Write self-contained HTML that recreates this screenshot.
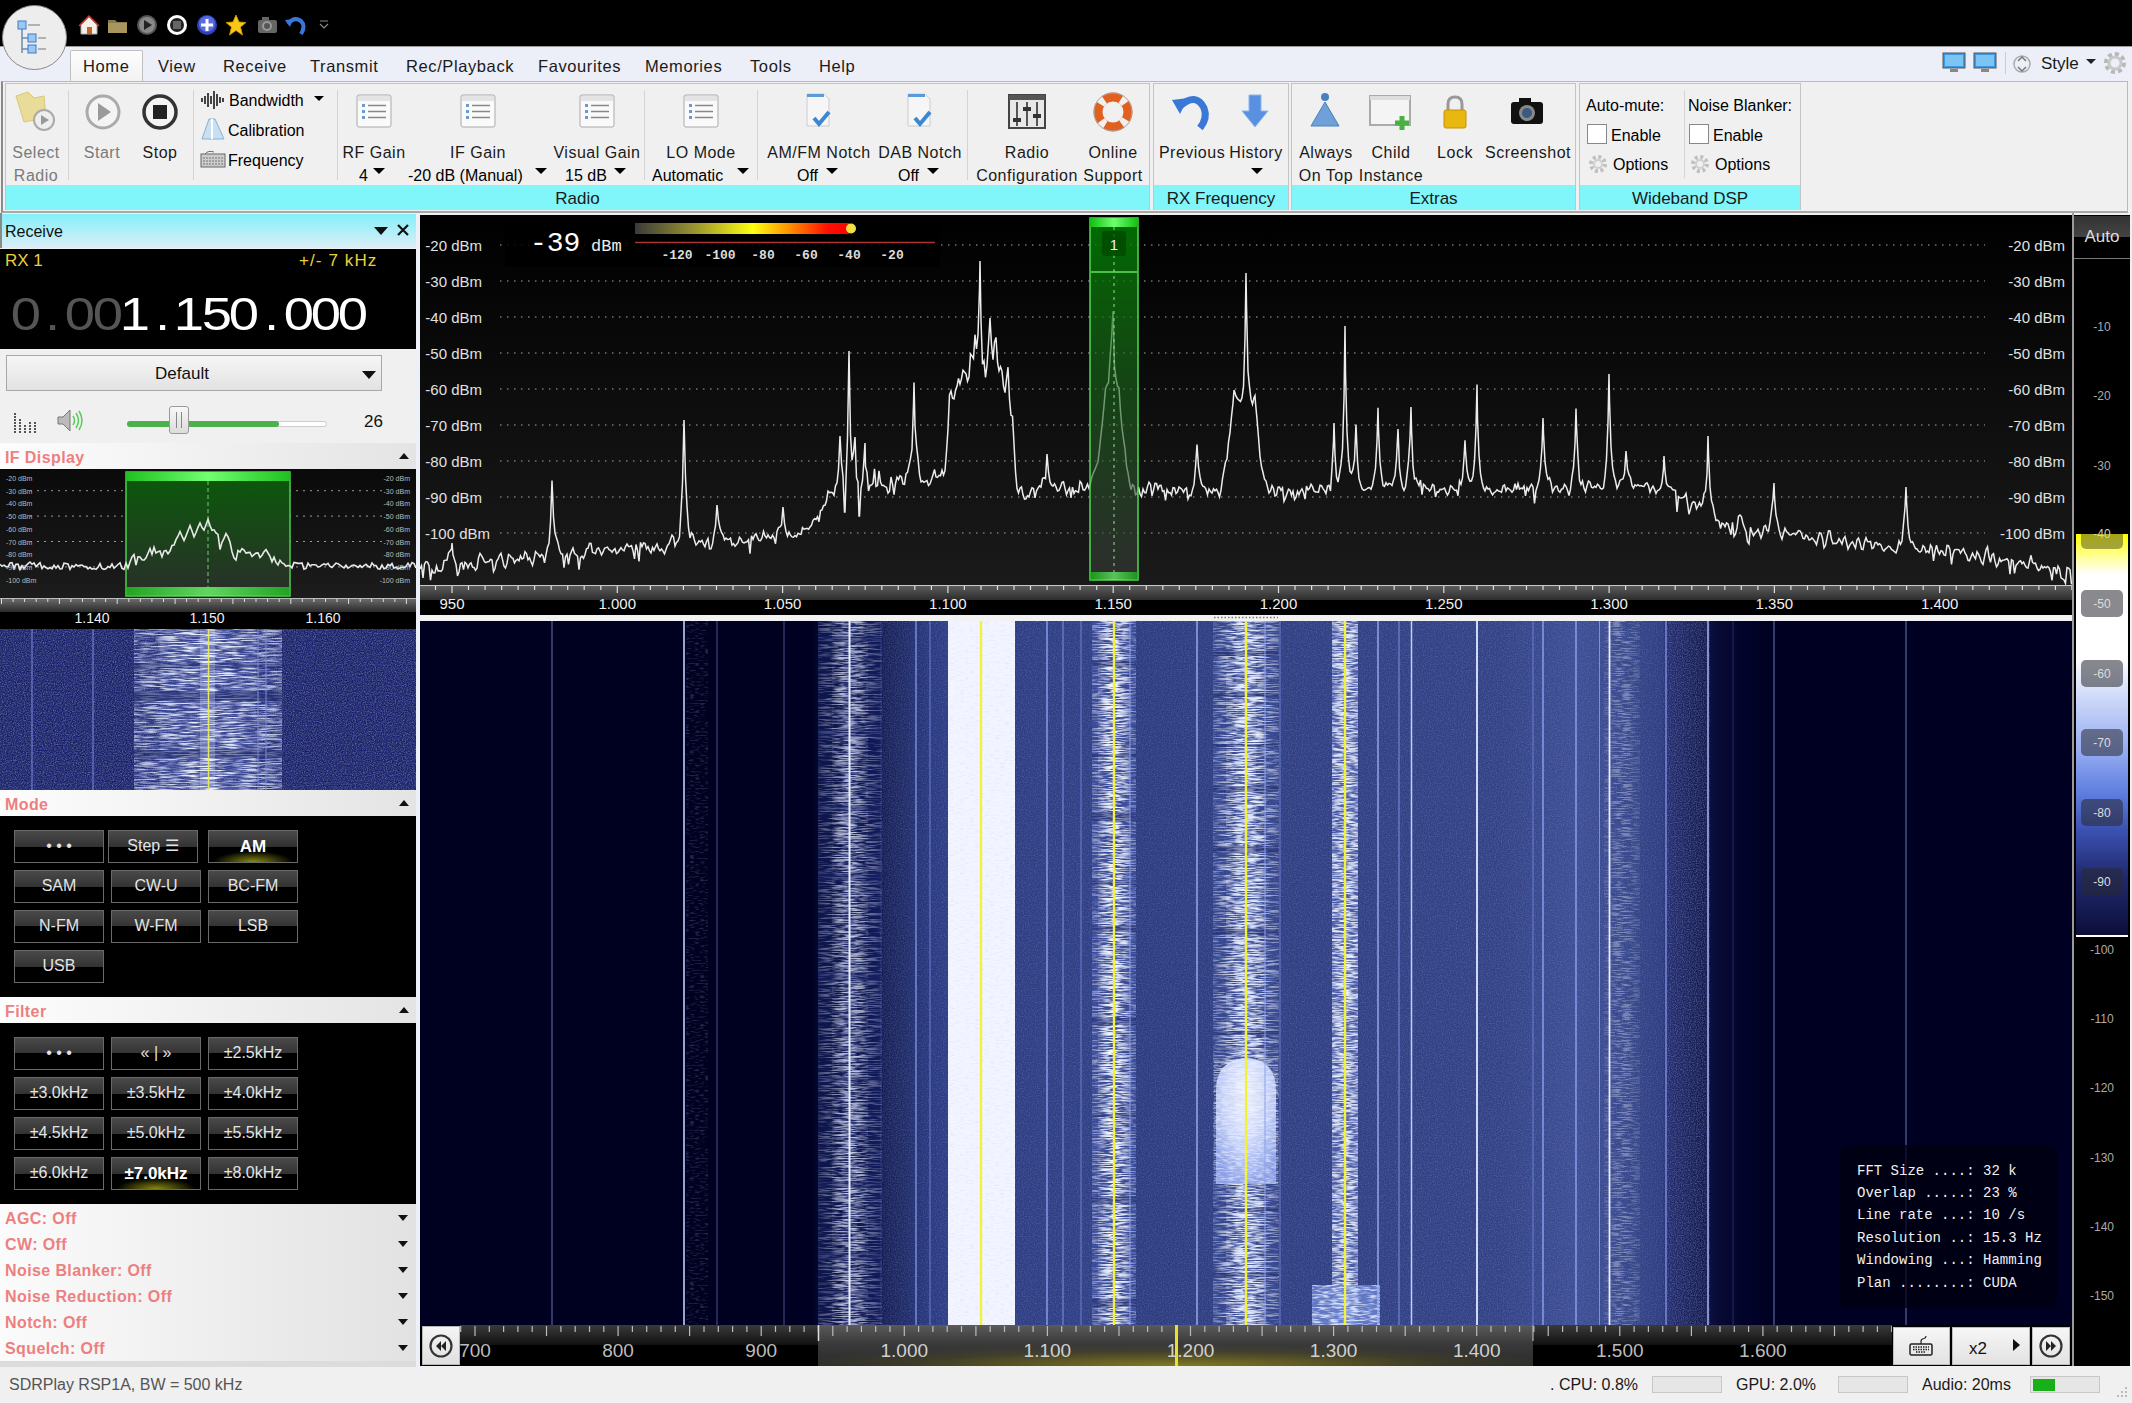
<!DOCTYPE html><html><head><meta charset="utf-8"><style>
*{margin:0;padding:0;box-sizing:border-box}
html,body{width:2132px;height:1403px;overflow:hidden;background:#f0f0f0;font-family:"Liberation Sans",sans-serif;color:#000}
.a{position:absolute}
.t{position:absolute;white-space:nowrap;line-height:1}
.ls{letter-spacing:0.5px}
.c{text-align:center}
</style></head><body><div class="a" style="left:0;top:0;width:2132px;height:46px;background:#000"></div>
<div class="a" style="left:0;top:46px;width:2132px;height:36px;background:#eceef8;border-top:1px solid #9a9a9a"></div>
<div class="a" style="left:2px;top:5px;width:65px;height:65px;border-radius:50%;background:#ededed;border:1px solid #8a8a8a"></div>
<svg class="a" style="left:16px;top:18px" width="34" height="40" viewBox="0 0 34 40"><path d="M6 8 V35 M6 20 H12 M6 31 H12" stroke="#6a8bb0" stroke-width="1.5" fill="none"/><rect x="2" y="3" width="8" height="8" fill="#9cc8f0" stroke="#3b7bc8"/><rect x="12" y="16" width="8" height="8" fill="#9cc8f0" stroke="#3b7bc8"/><rect x="12" y="27" width="8" height="8" fill="#9cc8f0" stroke="#3b7bc8"/><path d="M12 7H24 M22 20H30 M22 31H30" stroke="#777" stroke-width="1"/></svg>
<svg class="a" style="left:78px;top:14px" width="22" height="22" viewBox="0 0 22 22"><path d="M3 11 L11 3 L19 11 V20 H3Z" fill="#f4f0e8" stroke="#aaa"/><rect x="9" y="13" width="5" height="7" fill="#c8641e"/><path d="M1 12 L11 2 L21 12" stroke="#c33" stroke-width="1.5" fill="none"/></svg>
<svg class="a" style="left:106px;top:14px" width="22" height="22" viewBox="0 0 22 22"><path d="M2 6 H9 L11 8 H21 V19 H2Z" fill="#8a7a4a"/><path d="M2 9 H21 V19 H2Z" fill="#a8965c"/></svg>
<svg class="a" style="left:136px;top:14px" width="22" height="22" viewBox="0 0 22 22"><circle cx="11" cy="11" r="10" fill="#555"/><circle cx="11" cy="11" r="8" fill="#888"/><path d="M8 6 L16 11 L8 16Z" fill="#222"/></svg>
<svg class="a" style="left:166px;top:14px" width="22" height="22" viewBox="0 0 22 22"><circle cx="11" cy="11" r="10" fill="#fff"/><circle cx="11" cy="11" r="7" fill="#222"/><rect x="7" y="7" width="8" height="8" fill="#666"/></svg>
<svg class="a" style="left:196px;top:14px" width="22" height="22" viewBox="0 0 22 22"><circle cx="11" cy="11" r="10" fill="#3040b8"/><circle cx="11" cy="10" r="8" fill="#5a6ae0"/><path d="M11 5 V17 M5 11 H17" stroke="#fff" stroke-width="3"/></svg>
<svg class="a" style="left:225px;top:14px" width="22" height="22" viewBox="0 0 22 22"><path d="M11 1 L14 8 L21 8.5 L15.5 13 L17.5 21 L11 16.5 L4.5 21 L6.5 13 L1 8.5 L8 8Z" fill="#f8c818" stroke="#d89a00" stroke-width="0.8"/></svg>
<svg class="a" style="left:256px;top:14px" width="22" height="22" viewBox="0 0 22 22"><rect x="2" y="6" width="19" height="13" rx="2" fill="#666"/><rect x="6" y="3" width="7" height="4" fill="#666"/><circle cx="11" cy="12" r="5" fill="#999"/><circle cx="11" cy="12" r="3" fill="#555"/></svg>
<svg class="a" style="left:284px;top:14px" width="22" height="22" viewBox="0 0 22 22"><path d="M4 10 Q10 2 17 7 Q22 12 17 20" stroke="#3a78d8" stroke-width="4" fill="none"/><path d="M1 6 L9 5 L6 13Z" fill="#3a78d8"/></svg>
<svg class="a" style="left:319px;top:19px" width="10" height="12" viewBox="0 0 10 12"><path d="M1 2H9 M1 5 L5 9 L9 5" stroke="#888" stroke-width="1.2" fill="none"/></svg>
<div class="a" style="left:70px;top:50px;width:73px;height:32px;background:linear-gradient(#fdfdfd,#f2f2f2);border:1px solid #c0c0c0;border-bottom:none;border-radius:2px 2px 0 0"></div>
<div class="t" style="left:83px;top:58px;font-size:16.5px;letter-spacing:0.6px;color:#1a1a1a">Home</div>
<div class="t" style="left:158px;top:58px;font-size:16.5px;letter-spacing:0.6px;color:#1a1a1a">View</div>
<div class="t" style="left:223px;top:58px;font-size:16.5px;letter-spacing:0.6px;color:#1a1a1a">Receive</div>
<div class="t" style="left:310px;top:58px;font-size:16.5px;letter-spacing:0.6px;color:#1a1a1a">Transmit</div>
<div class="t" style="left:406px;top:58px;font-size:16.5px;letter-spacing:0.6px;color:#1a1a1a">Rec/Playback</div>
<div class="t" style="left:538px;top:58px;font-size:16.5px;letter-spacing:0.6px;color:#1a1a1a">Favourites</div>
<div class="t" style="left:645px;top:58px;font-size:16.5px;letter-spacing:0.6px;color:#1a1a1a">Memories</div>
<div class="t" style="left:750px;top:58px;font-size:16.5px;letter-spacing:0.6px;color:#1a1a1a">Tools</div>
<div class="t" style="left:819px;top:58px;font-size:16.5px;letter-spacing:0.6px;color:#1a1a1a">Help</div>
<svg class="a" style="left:1942px;top:52px" width="24" height="22" viewBox="0 0 24 22"><rect x="1" y="1" width="22" height="15" fill="#3a9ae8" stroke="#555"/><rect x="3" y="3" width="18" height="11" fill="#7cc4f4"/><rect x="8" y="17" width="8" height="3" fill="#888"/></svg>
<svg class="a" style="left:1973px;top:52px" width="24" height="22" viewBox="0 0 24 22"><rect x="1" y="1" width="22" height="15" fill="#3a9ae8" stroke="#555"/><rect x="3" y="3" width="18" height="11" fill="#7cc4f4"/><rect x="8" y="17" width="8" height="3" fill="#888"/></svg>
<div class="a" style="left:2005px;top:52px;width:1px;height:22px;background:#ccc"></div>
<svg class="a" style="left:2013px;top:51px" width="18" height="26" viewBox="0 0 18 26"><circle cx="9" cy="13" r="8" fill="none" stroke="#aaa" stroke-width="1.5"/><path d="M5 10 L9 6 L13 10 M5 16 L9 20 L13 16" stroke="#777" stroke-width="1.5" fill="none"/></svg>
<div class="t" style="left:2041px;top:55px;font-size:17px;color:#1a1a1a">Style</div>
<svg class="a" style="left:2086px;top:59px" width="10" height="6"><path d="M0 0H10L5 5Z" fill="#222"/></svg>
<svg class="a" style="left:2102px;top:50px" width="26" height="26" viewBox="0 0 26 26"><circle cx="13" cy="13" r="9" fill="none" stroke="#b8b8b8" stroke-width="4" stroke-dasharray="4 3"/><circle cx="13" cy="13" r="6" fill="none" stroke="#c8c8c8" stroke-width="3"/></svg>
<div class="a" style="left:1px;top:81px;width:2127px;height:132px;background:#f0f0f0;border:1px solid #b9b9b9;border-bottom:2px solid #a8a8a8;border-left:2px solid #8a8a8a"></div>
<div class="a" style="left:5px;top:83px;width:1145px;height:127px;border:1px solid #c4c4c4;background:#f0f0f0"></div>
<div class="a" style="left:6px;top:185px;width:1143px;height:25px;background:#80f6fa"></div>
<div class="t c" style="left:5px;width:1145px;top:190px;font-size:17px;color:#1a1a1a">Radio</div>
<div class="a" style="left:1153px;top:83px;width:136px;height:127px;border:1px solid #c4c4c4;background:#f0f0f0"></div>
<div class="a" style="left:1154px;top:185px;width:134px;height:25px;background:#80f6fa"></div>
<div class="t c" style="left:1153px;width:136px;top:190px;font-size:17px;color:#1a1a1a">RX Frequency</div>
<div class="a" style="left:1291px;top:83px;width:285px;height:127px;border:1px solid #c4c4c4;background:#f0f0f0"></div>
<div class="a" style="left:1292px;top:185px;width:283px;height:25px;background:#80f6fa"></div>
<div class="t c" style="left:1291px;width:285px;top:190px;font-size:17px;color:#1a1a1a">Extras</div>
<div class="a" style="left:1579px;top:83px;width:222px;height:127px;border:1px solid #c4c4c4;background:#f0f0f0"></div>
<div class="a" style="left:1580px;top:185px;width:220px;height:25px;background:#80f6fa"></div>
<div class="t c" style="left:1579px;width:222px;top:190px;font-size:17px;color:#1a1a1a">Wideband DSP</div>
<div class="a" style="left:68px;top:90px;width:1px;height:90px;background:#d4d4d4"></div>
<div class="a" style="left:193px;top:90px;width:1px;height:90px;background:#d4d4d4"></div>
<div class="a" style="left:337px;top:90px;width:1px;height:90px;background:#d4d4d4"></div>
<div class="a" style="left:644px;top:90px;width:1px;height:90px;background:#d4d4d4"></div>
<div class="a" style="left:757px;top:90px;width:1px;height:90px;background:#d4d4d4"></div>
<div class="a" style="left:967px;top:90px;width:1px;height:90px;background:#d4d4d4"></div>
<svg class="a" style="left:14px;top:90px" width="46" height="42" viewBox="0 0 46 42"><path d="M2 6 L14 2 L20 8 L30 6 L32 28 L10 32Z" fill="#e8dc98" stroke="#d8c878"/><circle cx="30" cy="30" r="10" fill="#eee" stroke="#aaa" stroke-width="2"/><path d="M27 25 L35 30 L27 35Z" fill="#999"/></svg>
<div class="t c" style="left:-114px;width:300px;top:144.5px;font-size:16px;letter-spacing:0.5px;color:#7a7a7a">Select</div>
<div class="t c" style="left:-114px;width:300px;top:167.5px;font-size:16px;letter-spacing:0.5px;color:#7a7a7a">Radio</div>
<svg class="a" style="left:84px;top:93px" width="38" height="38" viewBox="0 0 38 38"><circle cx="19" cy="19" r="16" fill="#f4f4f4" stroke="#aaa" stroke-width="3"/><path d="M14 10 L27 19 L14 28Z" fill="#9a9a9a"/></svg>
<div class="t c" style="left:-48px;width:300px;top:144.5px;font-size:16px;letter-spacing:0.5px;color:#7a7a7a">Start</div>
<svg class="a" style="left:141px;top:93px" width="38" height="38" viewBox="0 0 38 38"><circle cx="19" cy="19" r="16" fill="#f4f4f4" stroke="#333" stroke-width="3.5"/><rect x="12" y="12" width="14" height="14" fill="#222"/></svg>
<div class="t c" style="left:10px;width:300px;top:144.5px;font-size:16px;letter-spacing:0.5px;color:#1a1a1a">Stop</div>
<svg class="a" style="left:200px;top:90px" width="26" height="20" viewBox="0 0 26 20"><path d="M2 8V12 M5 6V14 M8 3V17 M11 6V14 M14 1V19 M17 4V16 M20 7V13 M23 8V12" stroke="#444" stroke-width="2"/></svg>
<div class="t" style="left:229px;top:93px;font-size:16px">Bandwidth</div>
<svg class="a" style="left:314px;top:96px" width="10" height="6"><path d="M0 0H10L5 5Z" fill="#000"/></svg>
<svg class="a" style="left:200px;top:117px" width="26" height="24" viewBox="0 0 26 24"><path d="M9 2 H15 L24 22 H2Z" fill="#c8e0f4" stroke="#8ab0d0"/><path d="M12 2V22" stroke="#fff" stroke-width="2"/></svg>
<div class="t" style="left:228px;top:123px;font-size:16px">Calibration</div>
<svg class="a" style="left:200px;top:150px" width="26" height="18" viewBox="0 0 26 18"><rect x="1" y="4" width="24" height="13" fill="#ccc" stroke="#666"/><path d="M3 8H23 M3 11H23 M3 14H23" stroke="#777" stroke-dasharray="2 1"/><path d="M5 4 Q8 0 14 2" stroke="#666" fill="none"/></svg>
<div class="t" style="left:228px;top:153px;font-size:16px">Frequency</div>
<svg class="a" style="left:356px;top:94px" width="36" height="34" viewBox="0 0 36 34"><rect x="1" y="1" width="34" height="32" rx="2" fill="#fafafa" stroke="#aaa"/><rect x="2" y="2" width="32" height="5" fill="#e4e4e4"/><rect x="6" y="10" width="3" height="3" fill="#6a9ad0"/><rect x="6" y="16" width="3" height="3" fill="#6a9ad0"/><rect x="6" y="22" width="3" height="3" fill="#6a9ad0"/><path d="M12 11.5H30 M12 17.5H30 M12 23.5H30" stroke="#888" stroke-width="1.5"/></svg>
<div class="t c" style="left:224px;width:300px;top:144.5px;font-size:16px;letter-spacing:0.5px;color:#1a1a1a">RF Gain</div>
<svg class="a" style="left:460px;top:94px" width="36" height="34" viewBox="0 0 36 34"><rect x="1" y="1" width="34" height="32" rx="2" fill="#fafafa" stroke="#aaa"/><rect x="2" y="2" width="32" height="5" fill="#e4e4e4"/><rect x="6" y="10" width="3" height="3" fill="#6a9ad0"/><rect x="6" y="16" width="3" height="3" fill="#6a9ad0"/><rect x="6" y="22" width="3" height="3" fill="#6a9ad0"/><path d="M12 11.5H30 M12 17.5H30 M12 23.5H30" stroke="#888" stroke-width="1.5"/></svg>
<div class="t c" style="left:328px;width:300px;top:144.5px;font-size:16px;letter-spacing:0.5px;color:#1a1a1a">IF Gain</div>
<svg class="a" style="left:579px;top:94px" width="36" height="34" viewBox="0 0 36 34"><rect x="1" y="1" width="34" height="32" rx="2" fill="#fafafa" stroke="#aaa"/><rect x="2" y="2" width="32" height="5" fill="#e4e4e4"/><rect x="6" y="10" width="3" height="3" fill="#6a9ad0"/><rect x="6" y="16" width="3" height="3" fill="#6a9ad0"/><rect x="6" y="22" width="3" height="3" fill="#6a9ad0"/><path d="M12 11.5H30 M12 17.5H30 M12 23.5H30" stroke="#888" stroke-width="1.5"/></svg>
<div class="t c" style="left:447px;width:300px;top:144.5px;font-size:16px;letter-spacing:0.5px;color:#1a1a1a">Visual Gain</div>
<svg class="a" style="left:683px;top:94px" width="36" height="34" viewBox="0 0 36 34"><rect x="1" y="1" width="34" height="32" rx="2" fill="#fafafa" stroke="#aaa"/><rect x="2" y="2" width="32" height="5" fill="#e4e4e4"/><rect x="6" y="10" width="3" height="3" fill="#6a9ad0"/><rect x="6" y="16" width="3" height="3" fill="#6a9ad0"/><rect x="6" y="22" width="3" height="3" fill="#6a9ad0"/><path d="M12 11.5H30 M12 17.5H30 M12 23.5H30" stroke="#888" stroke-width="1.5"/></svg>
<div class="t c" style="left:551px;width:300px;top:144.5px;font-size:16px;letter-spacing:0.5px;color:#1a1a1a">LO Mode</div>
<div class="t" style="left:359px;top:167.5px;font-size:16px">4</div>
<svg class="a" style="left:373px;top:168px" width="12" height="7"><path d="M0 0H12L6.0 6.0Z" fill="#000"/></svg>
<div class="t" style="left:408px;top:167.5px;font-size:16px">-20 dB (Manual)</div>
<svg class="a" style="left:535px;top:168px" width="12" height="7"><path d="M0 0H12L6.0 6.0Z" fill="#000"/></svg>
<div class="t" style="left:565px;top:167.5px;font-size:16px">15 dB</div>
<svg class="a" style="left:614px;top:168px" width="12" height="7"><path d="M0 0H12L6.0 6.0Z" fill="#000"/></svg>
<div class="t" style="left:652px;top:167.5px;font-size:16px">Automatic</div>
<svg class="a" style="left:737px;top:168px" width="12" height="7"><path d="M0 0H12L6.0 6.0Z" fill="#000"/></svg>
<svg class="a" style="left:802px;top:92px" width="34" height="40" viewBox="0 0 34 40"><path d="M5 2 H22 L27 7 V34 H5Z" fill="#f6f6f6" stroke="#ccc"/><rect x="5" y="2" width="17" height="3" fill="#5a9ad8"/><path d="M12 26 L17 32 L27 20" stroke="#3a88d0" stroke-width="4" fill="none"/></svg>
<div class="t c" style="left:669px;width:300px;top:144.5px;font-size:16px;letter-spacing:0.5px;color:#1a1a1a">AM/FM Notch</div>
<div class="t" style="left:797px;top:167.5px;font-size:16px">Off</div>
<svg class="a" style="left:826px;top:168px" width="12" height="7"><path d="M0 0H12L6.0 6.0Z" fill="#000"/></svg>
<svg class="a" style="left:903px;top:92px" width="34" height="40" viewBox="0 0 34 40"><path d="M5 2 H22 L27 7 V34 H5Z" fill="#f6f6f6" stroke="#ccc"/><rect x="5" y="2" width="17" height="3" fill="#5a9ad8"/><path d="M12 26 L17 32 L27 20" stroke="#3a88d0" stroke-width="4" fill="none"/></svg>
<div class="t c" style="left:770px;width:300px;top:144.5px;font-size:16px;letter-spacing:0.5px;color:#1a1a1a">DAB Notch</div>
<div class="t" style="left:898px;top:167.5px;font-size:16px">Off</div>
<svg class="a" style="left:927px;top:168px" width="12" height="7"><path d="M0 0H12L6.0 6.0Z" fill="#000"/></svg>
<svg class="a" style="left:1008px;top:94px" width="38" height="36" viewBox="0 0 38 36"><rect x="1" y="1" width="36" height="33" fill="#e8e8e8" stroke="#444" stroke-width="2"/><rect x="1" y="1" width="36" height="5" fill="#555"/><path d="M9 8V32 M19 8V32 M29 8V32" stroke="#555" stroke-width="2"/><rect x="5" y="24" width="8" height="4" fill="#333"/><rect x="15" y="13" width="8" height="4" fill="#333"/><rect x="25" y="20" width="8" height="4" fill="#333"/></svg>
<div class="t c" style="left:877px;width:300px;top:144.5px;font-size:16px;letter-spacing:0.5px;color:#1a1a1a">Radio</div>
<div class="t c" style="left:877px;width:300px;top:167.5px;font-size:16px;letter-spacing:0.5px;color:#1a1a1a">Configuration</div>
<svg class="a" style="left:1093px;top:92px" width="40" height="40" viewBox="0 0 40 40"><circle cx="20" cy="20" r="15" fill="none" stroke="#e06020" stroke-width="9"/><circle cx="20" cy="20" r="15" fill="none" stroke="#f0f0f0" stroke-width="9" stroke-dasharray="6 17.5" stroke-dashoffset="-8"/><circle cx="20" cy="20" r="19" fill="none" stroke="#aaa" stroke-width="1"/></svg>
<div class="t c" style="left:963px;width:300px;top:144.5px;font-size:16px;letter-spacing:0.5px;color:#1a1a1a">Online</div>
<div class="t c" style="left:963px;width:300px;top:167.5px;font-size:16px;letter-spacing:0.5px;color:#1a1a1a">Support</div>
<svg class="a" style="left:1170px;top:92px" width="44" height="40" viewBox="0 0 44 40"><path d="M10 14 Q26 0 34 16 Q38 26 30 36" stroke="#3a78d8" stroke-width="7" fill="none"/><path d="M2 8 L18 6 L10 22Z" fill="#3a78d8"/></svg>
<div class="t c" style="left:1042px;width:300px;top:144.5px;font-size:16px;letter-spacing:0.5px;color:#1a1a1a">Previous</div>
<svg class="a" style="left:1240px;top:93px" width="30" height="38" viewBox="0 0 30 38"><path d="M9 2 H21 V18 H28 L15 34 L2 18 H9Z" fill="#5a90e0" stroke="#8ab8f0"/></svg>
<div class="t c" style="left:1106px;width:300px;top:144.5px;font-size:16px;letter-spacing:0.5px;color:#1a1a1a">History</div>
<svg class="a" style="left:1251px;top:168px" width="12" height="7"><path d="M0 0H12L6.0 6.0Z" fill="#000"/></svg>
<svg class="a" style="left:1307px;top:92px" width="36" height="40" viewBox="0 0 36 40"><circle cx="18" cy="5" r="4" fill="#4a80c0"/><path d="M18 10 L32 34 H4Z" fill="#70a0d8" stroke="#4a80c0"/></svg>
<div class="t c" style="left:1176px;width:300px;top:144.5px;font-size:16px;letter-spacing:0.5px;color:#1a1a1a">Always</div>
<div class="t c" style="left:1176px;width:300px;top:167.5px;font-size:16px;letter-spacing:0.5px;color:#1a1a1a">On Top</div>
<svg class="a" style="left:1368px;top:94px" width="46" height="38" viewBox="0 0 46 38"><rect x="2" y="2" width="40" height="29" fill="#f4f4f4" stroke="#aaa" stroke-width="2"/><rect x="2" y="2" width="40" height="4" fill="#ddd"/><path d="M34 22V36 M27 29H41" stroke="#4ab040" stroke-width="5"/></svg>
<div class="t c" style="left:1241px;width:300px;top:144.5px;font-size:16px;letter-spacing:0.5px;color:#1a1a1a">Child</div>
<div class="t c" style="left:1241px;width:300px;top:167.5px;font-size:16px;letter-spacing:0.5px;color:#1a1a1a">Instance</div>
<svg class="a" style="left:1440px;top:94px" width="30" height="38" viewBox="0 0 30 38"><path d="M8 16 V10 Q8 3 15 3 Q22 3 22 10 V16" stroke="#999" stroke-width="3" fill="none"/><rect x="4" y="16" width="22" height="18" rx="2" fill="#e8b810" stroke="#c89000"/></svg>
<div class="t c" style="left:1305px;width:300px;top:144.5px;font-size:16px;letter-spacing:0.5px;color:#1a1a1a">Lock</div>
<svg class="a" style="left:1509px;top:96px" width="36" height="30" viewBox="0 0 36 30"><rect x="2" y="6" width="32" height="22" rx="3" fill="#111"/><rect x="10" y="2" width="12" height="6" fill="#111"/><circle cx="18" cy="17" r="8" fill="#888"/><circle cx="18" cy="17" r="5" fill="#3a5a80"/></svg>
<div class="t c" style="left:1378px;width:300px;top:144.5px;font-size:16px;letter-spacing:0.5px;color:#1a1a1a">Screenshot</div>
<div class="a" style="left:1684px;top:90px;width:1px;height:88px;background:#d4d4d4"></div>
<div class="t" style="left:1586px;top:98px;font-size:16px">Auto-mute:</div>
<div class="t" style="left:1688px;top:98px;font-size:16px">Noise Blanker:</div>
<div class="a" style="left:1587px;top:124px;width:20px;height:20px;background:#fff;border:1px solid #888"></div>
<div class="t" style="left:1611px;top:128px;font-size:16px">Enable</div>
<svg class="a" style="left:1587px;top:153px" width="22" height="22" viewBox="0 0 22 22"><circle cx="11" cy="11" r="7" fill="none" stroke="#c0c0c0" stroke-width="4" stroke-dasharray="3 2.5"/><circle cx="11" cy="11" r="4" fill="none" stroke="#d0d0d0" stroke-width="2"/></svg>
<div class="t" style="left:1613px;top:157px;font-size:16px">Options</div>
<div class="a" style="left:1689px;top:124px;width:20px;height:20px;background:#fff;border:1px solid #888"></div>
<div class="t" style="left:1713px;top:128px;font-size:16px">Enable</div>
<svg class="a" style="left:1689px;top:153px" width="22" height="22" viewBox="0 0 22 22"><circle cx="11" cy="11" r="7" fill="none" stroke="#c0c0c0" stroke-width="4" stroke-dasharray="3 2.5"/><circle cx="11" cy="11" r="4" fill="none" stroke="#d0d0d0" stroke-width="2"/></svg>
<div class="t" style="left:1715px;top:157px;font-size:16px">Options</div>
<div class="a" style="left:0;top:213px;width:420px;height:1155px;background:#eef0f6"></div>
<div class="a" style="left:2px;top:214px;width:414px;height:34px;background:linear-gradient(#82f0fa,#dceef6)"></div>
<div class="a" style="left:0;top:213px;width:2px;height:35px;background:#8a8a8a"></div>
<div class="t" style="left:5px;top:223.5px;font-size:16px;color:#111">Receive</div>
<svg class="a" style="left:374px;top:227px" width="14" height="8"><path d="M0 0H14L7 8Z" fill="#111"/></svg>
<svg class="a" style="left:396px;top:223px" width="14" height="14"><path d="M2 2L12 12M12 2L2 12" stroke="#111" stroke-width="2.2"/></svg>
<div class="a" style="left:0;top:249px;width:416px;height:100px;background:#000"></div>
<div class="t" style="left:5px;top:252px;font-size:17px;color:#e8d23a">RX 1</div>
<div class="t" style="left:299px;top:252px;font-size:17px;letter-spacing:1.1px;color:#e8d23a">+/- 7 kHz</div>
<div class="a" style="left:12px;top:289px;height:50px;font-size:46.5px;line-height:50px;white-space:nowrap"><span style="display:inline-block;width:27.3px;text-align:center;color:#555"><span style="display:inline-block;transform:scaleX(1.17)">0</span></span><span style="display:inline-block;width:27.3px;text-align:center;color:#555"><span style="display:inline-block;transform:scaleX(1.17)">.</span></span><span style="display:inline-block;width:27.3px;text-align:center;color:#555"><span style="display:inline-block;transform:scaleX(1.17)">0</span></span><span style="display:inline-block;width:27.3px;text-align:center;color:#555"><span style="display:inline-block;transform:scaleX(1.17)">0</span></span><span style="display:inline-block;width:27.3px;text-align:center;color:#fff"><span style="display:inline-block;transform:scaleX(1.17)">1</span></span><span style="display:inline-block;width:27.3px;text-align:center;color:#fff"><span style="display:inline-block;transform:scaleX(1.17)">.</span></span><span style="display:inline-block;width:27.3px;text-align:center;color:#fff"><span style="display:inline-block;transform:scaleX(1.17)">1</span></span><span style="display:inline-block;width:27.3px;text-align:center;color:#fff"><span style="display:inline-block;transform:scaleX(1.17)">5</span></span><span style="display:inline-block;width:27.3px;text-align:center;color:#fff"><span style="display:inline-block;transform:scaleX(1.17)">0</span></span><span style="display:inline-block;width:27.3px;text-align:center;color:#fff"><span style="display:inline-block;transform:scaleX(1.17)">.</span></span><span style="display:inline-block;width:27.3px;text-align:center;color:#fff"><span style="display:inline-block;transform:scaleX(1.17)">0</span></span><span style="display:inline-block;width:27.3px;text-align:center;color:#fff"><span style="display:inline-block;transform:scaleX(1.17)">0</span></span><span style="display:inline-block;width:27.3px;text-align:center;color:#fff"><span style="display:inline-block;transform:scaleX(1.17)">0</span></span></div>
<div class="a" style="left:0;top:349px;width:416px;height:94px;background:#f0f0f0"></div>
<div class="a" style="left:6px;top:355px;width:376px;height:36px;background:linear-gradient(#f6f6f6,#e2e2e2);border:1px solid #a8a8a8"></div>
<div class="t c" style="left:6px;width:352px;top:365px;font-size:17px;color:#111">Default</div>
<svg class="a" style="left:362px;top:371px" width="14" height="8"><path d="M0 0H14L7 8Z" fill="#111"/></svg>
<svg class="a" style="left:13px;top:412px" width="25" height="21" viewBox="0 0 25 21"><g stroke="#555" stroke-width="2" stroke-dasharray="2 1"><path d="M2 1V21"/><path d="M7 7V21"/><path d="M12 13V21"/><path d="M17 10V21"/><path d="M22 10V21"/></g></svg>
<svg class="a" style="left:57px;top:408px" width="28" height="25" viewBox="0 0 28 25"><path d="M1 9H6L13 2V23L6 16H1Z" fill="#bbb" stroke="#777"/><path d="M16 8Q19 12.5 16 17M19 5Q24 12.5 19 20M22 3Q28 12.5 22 22" stroke="#5c5" stroke-width="1.5" fill="none"/></svg>
<div class="a" style="left:127px;top:421px;width:200px;height:6px;border-radius:3px;background:#fff;border:1px solid #ccc"></div>
<div class="a" style="left:127px;top:421px;width:152px;height:6px;border-radius:3px;background:#4cb04c"></div>
<div class="a" style="left:169px;top:406px;width:20px;height:28px;border-radius:3px;background:linear-gradient(#f8f8f8,#dcdcdc);border:1px solid #999"></div>
<div class="a" style="left:176px;top:412px;width:1px;height:16px;background:#888"></div><div class="a" style="left:181px;top:412px;width:1px;height:16px;background:#888"></div>
<div class="t" style="left:364px;top:413px;font-size:17px;color:#111">26</div>
<div class="a" style="left:0;top:443px;width:416px;height:26px;background:linear-gradient(90deg,#fdfdfd,#e4e4e4)"></div>
<div class="t" style="left:5px;top:450px;font-size:16px;font-weight:bold;letter-spacing:0.4px;color:#ee7f7f">IF Display</div>
<svg class="a" style="left:399px;top:453px" width="10" height="6"><path d="M0 6H10L5 0Z" fill="#111"/></svg>
<div class="a" style="left:0;top:469px;width:416px;height:129px;background:linear-gradient(#0a0a0a,#1c1c1c)"></div>
<svg class="a" style="left:0;top:469px" width="416" height="160" viewBox="0 0 416 160"><text x="6" y="12.0" font-size="7" fill="#bbb" font-family="Liberation Sans">-20 dBm</text><text x="410" y="12.0" font-size="7" fill="#bbb" text-anchor="end" font-family="Liberation Sans">-20 dBm</text><text x="6" y="24.7" font-size="7" fill="#bbb" font-family="Liberation Sans">-30 dBm</text><text x="410" y="24.7" font-size="7" fill="#bbb" text-anchor="end" font-family="Liberation Sans">-30 dBm</text><path d="M30 21.7 H386" stroke="#999" stroke-width="1" stroke-dasharray="2 5"/><text x="6" y="37.4" font-size="7" fill="#bbb" font-family="Liberation Sans">-40 dBm</text><text x="410" y="37.4" font-size="7" fill="#bbb" text-anchor="end" font-family="Liberation Sans">-40 dBm</text><text x="6" y="50.099999999999994" font-size="7" fill="#bbb" font-family="Liberation Sans">-50 dBm</text><text x="410" y="50.099999999999994" font-size="7" fill="#bbb" text-anchor="end" font-family="Liberation Sans">-50 dBm</text><path d="M30 47.099999999999994 H386" stroke="#999" stroke-width="1" stroke-dasharray="2 5"/><text x="6" y="62.8" font-size="7" fill="#bbb" font-family="Liberation Sans">-60 dBm</text><text x="410" y="62.8" font-size="7" fill="#bbb" text-anchor="end" font-family="Liberation Sans">-60 dBm</text><text x="6" y="75.5" font-size="7" fill="#bbb" font-family="Liberation Sans">-70 dBm</text><text x="410" y="75.5" font-size="7" fill="#bbb" text-anchor="end" font-family="Liberation Sans">-70 dBm</text><path d="M30 72.5 H386" stroke="#999" stroke-width="1" stroke-dasharray="2 5"/><text x="6" y="88.19999999999999" font-size="7" fill="#bbb" font-family="Liberation Sans">-80 dBm</text><text x="410" y="88.19999999999999" font-size="7" fill="#bbb" text-anchor="end" font-family="Liberation Sans">-80 dBm</text><text x="6" y="100.89999999999999" font-size="7" fill="#bbb" font-family="Liberation Sans">-90 dBm</text><text x="410" y="100.89999999999999" font-size="7" fill="#bbb" text-anchor="end" font-family="Liberation Sans">-90 dBm</text><path d="M30 97.89999999999999 H386" stroke="#999" stroke-width="1" stroke-dasharray="2 5"/><text x="6" y="113.6" font-size="7" fill="#bbb" font-family="Liberation Sans">-100 dBm</text><text x="410" y="113.6" font-size="7" fill="#bbb" text-anchor="end" font-family="Liberation Sans">-100 dBm</text><defs><linearGradient id="gb" x1="0" y1="0" x2="0" y2="1"><stop offset="0" stop-color="#0a5a0a"/><stop offset="1" stop-color="#2a2e2a"/></linearGradient><linearGradient id="gt" x1="0" y1="0" x2="1" y2="0"><stop offset="0" stop-color="#20c020"/><stop offset="0.5" stop-color="#70ff70"/><stop offset="1" stop-color="#20c020"/></linearGradient></defs><rect x="126" y="3" width="164" height="124" fill="url(#gb)" stroke="#4cd04c" stroke-width="1.5"/><rect x="126" y="3" width="164" height="9" fill="url(#gt)"/><rect x="126" y="118" width="164" height="9" fill="url(#gt)" opacity="0.8"/><path d="M208 12V118" stroke="#7c7" stroke-dasharray="4 3"/><polyline points="0,95.2 2,97.3 4,96.1 6,97.7 8,97.9 10,94.0 12,93.6 14,99.4 16,95.3 18,95.1 20,100.5 22,96.8 24,99.4 26,96.8 28,94.6 30,93.0 32,95.3 34,93.9 36,97.6 38,95.6 40,93.7 42,99.6 44,96.8 46,98.5 48,99.7 50,98.5 52,99.9 54,96.3 56,99.1 58,96.6 60,100.0 62,99.7 64,94.2 66,94.5 68,95.0 70,100.3 72,96.6 74,97.9 76,95.6 78,97.1 80,96.2 82,96.0 84,97.6 86,97.6 88,99.8 90,98.3 92,100.0 94,99.5 96,100.4 98,98.2 100,94.6 102,99.5 104,100.3 106,99.8 108,97.5 110,98.5 112,95.0 114,99.3 116,97.5 118,95.5 120,93.9 122,99.5 124,100.4 126,94.1 128,99.1 130,93.0 132,87.9 134,85.6 136,96.0 138,87.8 140,88.0 142,90.7 144,91.2 146,88.8 148,84.2 150,79.5 152,85.4 154,78.2 156,84.1 158,82.7 160,82.1 162,87.9 164,82.1 166,81.5 168,84.8 170,82.1 172,76.5 174,76.1 176,70.7 178,67.2 180,62.5 182,67.2 184,71.5 186,66.9 188,61.8 190,56.5 192,62.1 194,67.8 196,63.5 198,58.4 200,53.9 202,58.5 204,61.2 206,55.7 208,50.4 210,56.6 212,61.3 214,60.8 216,64.0 218,65.4 220,80.5 222,73.4 224,69.4 226,64.6 228,67.9 230,73.1 232,82.7 234,88.9 236,91.1 238,81.5 240,83.1 242,79.6 244,81.0 246,84.1 248,83.6 250,83.4 252,87.5 254,85.6 256,84.1 258,83.9 260,88.5 262,86.2 264,82.8 266,80.6 268,84.0 270,87.4 272,92.8 274,88.1 276,93.4 278,96.0 280,91.3 282,93.9 284,94.9 286,97.2 288,96.5 290,96.8 292,98.9 294,93.5 296,93.9 298,94.4 300,94.4 302,94.0 304,100.3 306,99.5 308,94.1 310,97.0 312,95.7 314,95.7 316,96.0 318,98.0 320,97.6 322,96.0 324,94.8 326,95.8 328,94.4 330,97.4 332,98.5 334,96.2 336,94.1 338,94.7 340,96.1 342,97.7 344,99.0 346,96.2 348,99.1 350,97.9 352,96.5 354,96.1 356,97.0 358,98.4 360,96.4 362,98.4 364,96.7 366,95.2 368,97.3 370,98.4 372,94.0 374,96.5 376,96.5 378,99.7 380,100.1 382,96.1 384,99.8 386,99.0 388,95.3 390,96.7 392,94.4 394,99.2 396,98.1 398,99.7 400,99.0 402,98.2 404,98.6 406,97.4 408,94.2 410,97.6 412,93.5 414,94.5 416,98.9" fill="none" stroke="#e8e8e8" stroke-width="1.6"/></svg>
<div class="a" style="left:0;top:598px;width:416px;height:14px;background:linear-gradient(#6a6a6a,#2a2a2a);border-top:1px solid #bbb"></div>
<svg class="a" style="left:0;top:598px" width="416" height="10"><path d="M1.5 1V6" stroke="#ddd" stroke-width="1"/><path d="M13.1 1V4" stroke="#ddd" stroke-width="1"/><path d="M24.6 1V4" stroke="#ddd" stroke-width="1"/><path d="M36.2 1V4" stroke="#ddd" stroke-width="1"/><path d="M47.8 1V4" stroke="#ddd" stroke-width="1"/><path d="M59.4 1V6" stroke="#ddd" stroke-width="1"/><path d="M70.9 1V4" stroke="#ddd" stroke-width="1"/><path d="M82.5 1V4" stroke="#ddd" stroke-width="1"/><path d="M94.1 1V4" stroke="#ddd" stroke-width="1"/><path d="M105.6 1V4" stroke="#ddd" stroke-width="1"/><path d="M117.2 1V6" stroke="#ddd" stroke-width="1"/><path d="M128.8 1V4" stroke="#ddd" stroke-width="1"/><path d="M140.3 1V4" stroke="#ddd" stroke-width="1"/><path d="M151.9 1V4" stroke="#ddd" stroke-width="1"/><path d="M163.5 1V4" stroke="#ddd" stroke-width="1"/><path d="M175.1 1V6" stroke="#ddd" stroke-width="1"/><path d="M186.6 1V4" stroke="#ddd" stroke-width="1"/><path d="M198.2 1V4" stroke="#ddd" stroke-width="1"/><path d="M209.8 1V4" stroke="#ddd" stroke-width="1"/><path d="M221.3 1V4" stroke="#ddd" stroke-width="1"/><path d="M232.9 1V6" stroke="#ddd" stroke-width="1"/><path d="M244.5 1V4" stroke="#ddd" stroke-width="1"/><path d="M256.0 1V4" stroke="#ddd" stroke-width="1"/><path d="M267.6 1V4" stroke="#ddd" stroke-width="1"/><path d="M279.2 1V4" stroke="#ddd" stroke-width="1"/><path d="M290.8 1V6" stroke="#ddd" stroke-width="1"/><path d="M302.3 1V4" stroke="#ddd" stroke-width="1"/><path d="M313.9 1V4" stroke="#ddd" stroke-width="1"/><path d="M325.5 1V4" stroke="#ddd" stroke-width="1"/><path d="M337.0 1V4" stroke="#ddd" stroke-width="1"/><path d="M348.6 1V6" stroke="#ddd" stroke-width="1"/><path d="M360.2 1V4" stroke="#ddd" stroke-width="1"/><path d="M371.7 1V4" stroke="#ddd" stroke-width="1"/><path d="M383.3 1V4" stroke="#ddd" stroke-width="1"/><path d="M394.9 1V4" stroke="#ddd" stroke-width="1"/><path d="M406.4 1V6" stroke="#ddd" stroke-width="1"/></svg>
<div class="a" style="left:0;top:612px;width:416px;height:17px;background:#000"></div>
<div class="t c" style="left:52px;width:80px;top:611px;font-size:14px;color:#eee">1.140</div>
<div class="t c" style="left:167px;width:80px;top:611px;font-size:14px;color:#eee">1.150</div>
<div class="t c" style="left:283px;width:80px;top:611px;font-size:14px;color:#eee">1.160</div>
<svg class="a" style="left:0;top:629px" width="416" height="161" viewBox="0 0 416 161"><defs><filter id="nz" x="0" y="0" width="100%" height="100%"><feTurbulence type="fractalNoise" baseFrequency="0.9" numOctaves="1" seed="4"/><feColorMatrix values="0 0 0 0 0.4  0 0 0 0 0.45  0 0 0 0 0.8  0 0 0 1.6 -0.65"/></filter><filter id="nzd" x="0" y="0" width="100%" height="100%"><feTurbulence type="fractalNoise" baseFrequency="0.8" numOctaves="1" seed="12"/><feColorMatrix values="0 0 0 0 0  0 0 0 0 0  0 0 0 0 0.15  0 0 0 1.8 -0.72"/></filter><filter id="mst" x="0" y="0" width="100%" height="100%"><feTurbulence type="fractalNoise" baseFrequency="0.09 0.55" numOctaves="2" seed="21"/><feColorMatrix values="0 0 0 0 0.85  0 0 0 0 0.9  0 0 0 0 1  0 0 0 3.4 -1.45"/></filter></defs><rect width="416" height="161" fill="#28326c"/><rect width="416" height="161" filter="url(#nz)" opacity="0.7"/><rect width="416" height="161" filter="url(#nzd)" opacity="0.9"/><defs><filter id="mst2" x="0" y="0" width="100%" height="100%"><feTurbulence type="fractalNoise" baseFrequency="0.05 0.75" numOctaves="2" seed="31"/><feColorMatrix values="0 0 0 0 0.85  0 0 0 0 0.9  0 0 0 0 1  0 0 0 4.2 -1.9"/></filter><linearGradient id="mhg" x1="0" x2="1"><stop offset="0" stop-color="#fff" stop-opacity="0.55"/><stop offset="0.45" stop-color="#fff" stop-opacity="1"/><stop offset="0.55" stop-color="#fff" stop-opacity="1"/><stop offset="1" stop-color="#fff" stop-opacity="0.55"/></linearGradient><mask id="mmk" maskContentUnits="objectBoundingBox"><rect width="1" height="1" fill="url(#mhg)"/></mask></defs><rect x="134" y="0" width="148" height="161" fill="#3a4aa0" opacity="0.3"/><rect x="160" y="0" width="96" height="161" fill="#5060b8" opacity="0.3"/><g mask="url(#mmk)"><rect x="134" y="0" width="148" height="161" filter="url(#mst2)" opacity="1"/></g><rect x="134" y="0" width="148" height="161" filter="url(#mst)" opacity="0.35"/><rect x="134" y="62" width="148" height="10" fill="#1a2468" opacity="0.55"/><rect x="134" y="121" width="148" height="8" fill="#1a2468" opacity="0.5"/><rect x="134" y="34" width="148" height="5" fill="#1a2468" opacity="0.4"/><rect x="200" y="0" width="15" height="161" fill="#d0dcff" opacity="0.3"/><path d="M208.5 0V161" stroke="#e8e860" stroke-width="1.5"/><path d="M32 0V161" stroke="#7a8ae0" stroke-width="1"/><path d="M93 0V161" stroke="#7a8ae0" stroke-width="1"/><path d="M258 0V161" stroke="#7a8ae0" stroke-width="1"/><path d="M266 0V161" stroke="#7a8ae0" stroke-width="1"/></svg>
<div class="a" style="left:0;top:790px;width:416px;height:26px;background:linear-gradient(90deg,#fdfdfd,#e4e4e4)"></div>
<div class="t" style="left:5px;top:797px;font-size:16px;font-weight:bold;letter-spacing:0.4px;color:#ee7f7f">Mode</div>
<svg class="a" style="left:399px;top:800px" width="10" height="6"><path d="M0 6H10L5 0Z" fill="#111"/></svg>
<div class="a" style="left:0;top:816px;width:416px;height:181px;background:#000"></div>
<div class="a" style="left:14px;top:830px;width:90px;height:33px;border:1px solid #6a6a6a;background:linear-gradient(#4a4a4a,#333 50%,#000 50%,#000)"></div>
<div class="t c" style="left:14px;width:90px;top:838px;font-size:16px;font-weight:normal;color:#e4e4e4">• • •</div>
<div class="a" style="left:108px;top:830px;width:90px;height:33px;border:1px solid #6a6a6a;background:linear-gradient(#4a4a4a,#333 50%,#000 50%,#000)"></div>
<div class="t c" style="left:108px;width:90px;top:838px;font-size:16px;font-weight:normal;color:#e4e4e4">Step ☰</div>
<div class="a" style="left:208px;top:830px;width:90px;height:33px;border:1px solid #6a6a6a;background:radial-gradient(ellipse 45% 35% at 50% 100%,#8a8a10,transparent),linear-gradient(#4a4a4a,#303030 50%,#000 50%,#000)"></div>
<div class="t c" style="left:208px;width:90px;top:838px;font-size:17px;font-weight:bold;color:#fff">AM</div>
<div class="a" style="left:14px;top:870px;width:90px;height:33px;border:1px solid #6a6a6a;background:linear-gradient(#4a4a4a,#333 50%,#000 50%,#000)"></div>
<div class="t c" style="left:14px;width:90px;top:878px;font-size:16px;font-weight:normal;color:#e4e4e4">SAM</div>
<div class="a" style="left:111px;top:870px;width:90px;height:33px;border:1px solid #6a6a6a;background:linear-gradient(#4a4a4a,#333 50%,#000 50%,#000)"></div>
<div class="t c" style="left:111px;width:90px;top:878px;font-size:16px;font-weight:normal;color:#e4e4e4">CW-U</div>
<div class="a" style="left:208px;top:870px;width:90px;height:33px;border:1px solid #6a6a6a;background:linear-gradient(#4a4a4a,#333 50%,#000 50%,#000)"></div>
<div class="t c" style="left:208px;width:90px;top:878px;font-size:16px;font-weight:normal;color:#e4e4e4">BC-FM</div>
<div class="a" style="left:14px;top:910px;width:90px;height:33px;border:1px solid #6a6a6a;background:linear-gradient(#4a4a4a,#333 50%,#000 50%,#000)"></div>
<div class="t c" style="left:14px;width:90px;top:918px;font-size:16px;font-weight:normal;color:#e4e4e4">N-FM</div>
<div class="a" style="left:111px;top:910px;width:90px;height:33px;border:1px solid #6a6a6a;background:linear-gradient(#4a4a4a,#333 50%,#000 50%,#000)"></div>
<div class="t c" style="left:111px;width:90px;top:918px;font-size:16px;font-weight:normal;color:#e4e4e4">W-FM</div>
<div class="a" style="left:208px;top:910px;width:90px;height:33px;border:1px solid #6a6a6a;background:linear-gradient(#4a4a4a,#333 50%,#000 50%,#000)"></div>
<div class="t c" style="left:208px;width:90px;top:918px;font-size:16px;font-weight:normal;color:#e4e4e4">LSB</div>
<div class="a" style="left:14px;top:950px;width:90px;height:33px;border:1px solid #6a6a6a;background:linear-gradient(#4a4a4a,#333 50%,#000 50%,#000)"></div>
<div class="t c" style="left:14px;width:90px;top:958px;font-size:16px;font-weight:normal;color:#e4e4e4">USB</div>
<div class="a" style="left:0;top:997px;width:416px;height:26px;background:linear-gradient(90deg,#fdfdfd,#e4e4e4)"></div>
<div class="t" style="left:5px;top:1004px;font-size:16px;font-weight:bold;letter-spacing:0.4px;color:#ee7f7f">Filter</div>
<svg class="a" style="left:399px;top:1007px" width="10" height="6"><path d="M0 6H10L5 0Z" fill="#111"/></svg>
<div class="a" style="left:0;top:1023px;width:416px;height:181px;background:#000"></div>
<div class="a" style="left:14px;top:1037px;width:90px;height:33px;border:1px solid #6a6a6a;background:linear-gradient(#4a4a4a,#333 50%,#000 50%,#000)"></div>
<div class="t c" style="left:14px;width:90px;top:1045px;font-size:16px;font-weight:normal;color:#e4e4e4">• • •</div>
<div class="a" style="left:111px;top:1037px;width:90px;height:33px;border:1px solid #6a6a6a;background:linear-gradient(#4a4a4a,#333 50%,#000 50%,#000)"></div>
<div class="t c" style="left:111px;width:90px;top:1045px;font-size:16px;font-weight:normal;color:#e4e4e4">« | »</div>
<div class="a" style="left:208px;top:1037px;width:90px;height:33px;border:1px solid #6a6a6a;background:linear-gradient(#4a4a4a,#333 50%,#000 50%,#000)"></div>
<div class="t c" style="left:208px;width:90px;top:1045px;font-size:16px;font-weight:normal;color:#e4e4e4">±2.5kHz</div>
<div class="a" style="left:14px;top:1077px;width:90px;height:33px;border:1px solid #6a6a6a;background:linear-gradient(#4a4a4a,#333 50%,#000 50%,#000)"></div>
<div class="t c" style="left:14px;width:90px;top:1085px;font-size:16px;font-weight:normal;color:#e4e4e4">±3.0kHz</div>
<div class="a" style="left:111px;top:1077px;width:90px;height:33px;border:1px solid #6a6a6a;background:linear-gradient(#4a4a4a,#333 50%,#000 50%,#000)"></div>
<div class="t c" style="left:111px;width:90px;top:1085px;font-size:16px;font-weight:normal;color:#e4e4e4">±3.5kHz</div>
<div class="a" style="left:208px;top:1077px;width:90px;height:33px;border:1px solid #6a6a6a;background:linear-gradient(#4a4a4a,#333 50%,#000 50%,#000)"></div>
<div class="t c" style="left:208px;width:90px;top:1085px;font-size:16px;font-weight:normal;color:#e4e4e4">±4.0kHz</div>
<div class="a" style="left:14px;top:1117px;width:90px;height:33px;border:1px solid #6a6a6a;background:linear-gradient(#4a4a4a,#333 50%,#000 50%,#000)"></div>
<div class="t c" style="left:14px;width:90px;top:1125px;font-size:16px;font-weight:normal;color:#e4e4e4">±4.5kHz</div>
<div class="a" style="left:111px;top:1117px;width:90px;height:33px;border:1px solid #6a6a6a;background:linear-gradient(#4a4a4a,#333 50%,#000 50%,#000)"></div>
<div class="t c" style="left:111px;width:90px;top:1125px;font-size:16px;font-weight:normal;color:#e4e4e4">±5.0kHz</div>
<div class="a" style="left:208px;top:1117px;width:90px;height:33px;border:1px solid #6a6a6a;background:linear-gradient(#4a4a4a,#333 50%,#000 50%,#000)"></div>
<div class="t c" style="left:208px;width:90px;top:1125px;font-size:16px;font-weight:normal;color:#e4e4e4">±5.5kHz</div>
<div class="a" style="left:14px;top:1157px;width:90px;height:33px;border:1px solid #6a6a6a;background:linear-gradient(#4a4a4a,#333 50%,#000 50%,#000)"></div>
<div class="t c" style="left:14px;width:90px;top:1165px;font-size:16px;font-weight:normal;color:#e4e4e4">±6.0kHz</div>
<div class="a" style="left:111px;top:1157px;width:90px;height:33px;border:1px solid #6a6a6a;background:radial-gradient(ellipse 45% 35% at 50% 100%,#8a8a10,transparent),linear-gradient(#4a4a4a,#303030 50%,#000 50%,#000)"></div>
<div class="t c" style="left:111px;width:90px;top:1165px;font-size:17px;font-weight:bold;color:#fff">±7.0kHz</div>
<div class="a" style="left:208px;top:1157px;width:90px;height:33px;border:1px solid #6a6a6a;background:linear-gradient(#4a4a4a,#333 50%,#000 50%,#000)"></div>
<div class="t c" style="left:208px;width:90px;top:1165px;font-size:16px;font-weight:normal;color:#e4e4e4">±8.0kHz</div>
<div class="a" style="left:0;top:1204px;width:416px;height:157px;background:linear-gradient(90deg,#fbfbfb,#e2e2e2)"></div>
<div class="t" style="left:5px;top:1211px;font-size:16px;font-weight:bold;letter-spacing:0.4px;color:#ee7f7f">AGC: Off</div>
<svg class="a" style="left:398px;top:1215px" width="10" height="6"><path d="M0 0H10L5 6Z" fill="#111"/></svg>
<div class="t" style="left:5px;top:1237px;font-size:16px;font-weight:bold;letter-spacing:0.4px;color:#ee7f7f">CW: Off</div>
<svg class="a" style="left:398px;top:1241px" width="10" height="6"><path d="M0 0H10L5 6Z" fill="#111"/></svg>
<div class="t" style="left:5px;top:1263px;font-size:16px;font-weight:bold;letter-spacing:0.4px;color:#ee7f7f">Noise Blanker: Off</div>
<svg class="a" style="left:398px;top:1267px" width="10" height="6"><path d="M0 0H10L5 6Z" fill="#111"/></svg>
<div class="t" style="left:5px;top:1289px;font-size:16px;font-weight:bold;letter-spacing:0.4px;color:#ee7f7f">Noise Reduction: Off</div>
<svg class="a" style="left:398px;top:1293px" width="10" height="6"><path d="M0 0H10L5 6Z" fill="#111"/></svg>
<div class="t" style="left:5px;top:1315px;font-size:16px;font-weight:bold;letter-spacing:0.4px;color:#ee7f7f">Notch: Off</div>
<svg class="a" style="left:398px;top:1319px" width="10" height="6"><path d="M0 0H10L5 6Z" fill="#111"/></svg>
<div class="t" style="left:5px;top:1341px;font-size:16px;font-weight:bold;letter-spacing:0.4px;color:#ee7f7f">Squelch: Off</div>
<svg class="a" style="left:398px;top:1345px" width="10" height="6"><path d="M0 0H10L5 6Z" fill="#111"/></svg>
<div class="a" style="left:0;top:1361px;width:420px;height:7px;background:#dcdcdc"></div>
<div class="a" style="left:0;top:1367px;width:2132px;height:36px;background:#f0f0f0"></div>
<div class="t" style="left:9px;top:1377px;font-size:16px;color:#555">SDRPlay RSP1A, BW = 500 kHz</div>
<div class="t" style="left:1550px;top:1377px;font-size:16px;color:#1a1a1a">. CPU: 0.8%</div>
<div class="a" style="left:1652px;top:1376px;width:70px;height:17px;background:#e6e6e6;border:1px solid #c8c8c8"></div>
<div class="t" style="left:1736px;top:1377px;font-size:16px;color:#1a1a1a">GPU: 2.0%</div>
<div class="a" style="left:1838px;top:1376px;width:70px;height:17px;background:#e6e6e6;border:1px solid #c8c8c8"></div>
<div class="t" style="left:1922px;top:1377px;font-size:16px;color:#1a1a1a">Audio: 20ms</div>
<div class="a" style="left:2030px;top:1376px;width:70px;height:17px;background:#e6e6e6;border:1px solid #c8c8c8"></div>
<div class="a" style="left:2033px;top:1379px;width:22px;height:12px;background:#18b018"></div>
<svg class="a" style="left:2116px;top:1386px" width="12" height="12"><g fill="#bbb"><rect x="9" y="1" width="2" height="2"/><rect x="5" y="5" width="2" height="2"/><rect x="9" y="5" width="2" height="2"/><rect x="1" y="9" width="2" height="2"/><rect x="5" y="9" width="2" height="2"/><rect x="9" y="9" width="2" height="2"/></g></svg>
<div class="a" style="left:416px;top:213px;width:4px;height:1155px;background:#eef0f8"></div>
<div class="a" style="left:420px;top:215px;width:1652px;height:370px;background:linear-gradient(#000,#1a1a1a)"></div>
<svg class="a" style="left:420px;top:215px" width="1652" height="370" viewBox="420 215 1652 370"><path d="M500 245H1985" stroke="#a8a8a8" stroke-width="1" stroke-dasharray="1.5 5.5"/><text x="482" y="250.5" font-size="15" fill="#e0e0e0" text-anchor="end" font-family="Liberation Sans">-20 dBm</text><text x="2065" y="250.5" font-size="15" fill="#e0e0e0" text-anchor="end" font-family="Liberation Sans">-20 dBm</text><path d="M500 281H1985" stroke="#a8a8a8" stroke-width="1" stroke-dasharray="1.5 5.5"/><text x="482" y="286.5" font-size="15" fill="#e0e0e0" text-anchor="end" font-family="Liberation Sans">-30 dBm</text><text x="2065" y="286.5" font-size="15" fill="#e0e0e0" text-anchor="end" font-family="Liberation Sans">-30 dBm</text><path d="M500 317H1985" stroke="#a8a8a8" stroke-width="1" stroke-dasharray="1.5 5.5"/><text x="482" y="322.5" font-size="15" fill="#e0e0e0" text-anchor="end" font-family="Liberation Sans">-40 dBm</text><text x="2065" y="322.5" font-size="15" fill="#e0e0e0" text-anchor="end" font-family="Liberation Sans">-40 dBm</text><path d="M500 353H1985" stroke="#a8a8a8" stroke-width="1" stroke-dasharray="1.5 5.5"/><text x="482" y="358.5" font-size="15" fill="#e0e0e0" text-anchor="end" font-family="Liberation Sans">-50 dBm</text><text x="2065" y="358.5" font-size="15" fill="#e0e0e0" text-anchor="end" font-family="Liberation Sans">-50 dBm</text><path d="M500 389H1985" stroke="#a8a8a8" stroke-width="1" stroke-dasharray="1.5 5.5"/><text x="482" y="394.5" font-size="15" fill="#e0e0e0" text-anchor="end" font-family="Liberation Sans">-60 dBm</text><text x="2065" y="394.5" font-size="15" fill="#e0e0e0" text-anchor="end" font-family="Liberation Sans">-60 dBm</text><path d="M500 425H1985" stroke="#a8a8a8" stroke-width="1" stroke-dasharray="1.5 5.5"/><text x="482" y="430.5" font-size="15" fill="#e0e0e0" text-anchor="end" font-family="Liberation Sans">-70 dBm</text><text x="2065" y="430.5" font-size="15" fill="#e0e0e0" text-anchor="end" font-family="Liberation Sans">-70 dBm</text><path d="M500 461H1985" stroke="#a8a8a8" stroke-width="1" stroke-dasharray="1.5 5.5"/><text x="482" y="466.5" font-size="15" fill="#e0e0e0" text-anchor="end" font-family="Liberation Sans">-80 dBm</text><text x="2065" y="466.5" font-size="15" fill="#e0e0e0" text-anchor="end" font-family="Liberation Sans">-80 dBm</text><path d="M500 497H1985" stroke="#a8a8a8" stroke-width="1" stroke-dasharray="1.5 5.5"/><text x="482" y="502.5" font-size="15" fill="#e0e0e0" text-anchor="end" font-family="Liberation Sans">-90 dBm</text><text x="2065" y="502.5" font-size="15" fill="#e0e0e0" text-anchor="end" font-family="Liberation Sans">-90 dBm</text><path d="M500 533H1985" stroke="#a8a8a8" stroke-width="1" stroke-dasharray="1.5 5.5"/><text x="490" y="538.5" font-size="15" fill="#e0e0e0" text-anchor="end" font-family="Liberation Sans">-100 dBm</text><text x="2065" y="538.5" font-size="15" fill="#e0e0e0" text-anchor="end" font-family="Liberation Sans">-100 dBm</text><text x="482" y="215" font-size="15" fill="#e0e0e0" text-anchor="end" font-family="Liberation Sans">-10 dBm</text><text x="2065" y="215" font-size="15" fill="#e0e0e0" text-anchor="end" font-family="Liberation Sans">-10 dBm</text><rect x="505" y="217" width="435" height="50" fill="#000" opacity="0.85"/><defs><linearGradient id="mg" x1="0" x2="1"><stop offset="0" stop-color="#3a3a3a"/><stop offset="0.28" stop-color="#9a9430"/><stop offset="0.55" stop-color="#ffff10"/><stop offset="0.72" stop-color="#ff9000"/><stop offset="0.9" stop-color="#ff1000"/><stop offset="1" stop-color="#ff0000"/></linearGradient></defs><rect x="635" y="223" width="214" height="11" fill="url(#mg)"/><circle cx="851" cy="228.5" r="5" fill="#f4e040"/><path d="M635 242.5H935" stroke="#a83434" stroke-width="1.5"/><text x="677" y="258.5" font-size="13" fill="#ddd" text-anchor="middle" font-family="Liberation Mono" font-weight="bold">-120</text><text x="720" y="258.5" font-size="13" fill="#ddd" text-anchor="middle" font-family="Liberation Mono" font-weight="bold">-100</text><text x="763" y="258.5" font-size="13" fill="#ddd" text-anchor="middle" font-family="Liberation Mono" font-weight="bold">-80</text><text x="806" y="258.5" font-size="13" fill="#ddd" text-anchor="middle" font-family="Liberation Mono" font-weight="bold">-60</text><text x="849" y="258.5" font-size="13" fill="#ddd" text-anchor="middle" font-family="Liberation Mono" font-weight="bold">-40</text><text x="892" y="258.5" font-size="13" fill="#ddd" text-anchor="middle" font-family="Liberation Mono" font-weight="bold">-20</text><text x="530" y="251" font-size="28" fill="#fff" font-family="Liberation Mono">-39</text><text x="591" y="251" font-size="17" fill="#eee" font-family="Liberation Mono">dBm</text></svg>
<svg class="a" style="left:420px;top:215px" width="1652" height="370" viewBox="420 215 1652 370"><polyline points="420.0,568.8 421.5,565.7 423.0,577.8 424.5,564.1 426.0,561.6 427.5,562.1 429.0,565.5 430.5,580.1 432.0,570.1 433.5,573.0 435.0,572.9 436.5,566.0 438.0,571.0 439.5,570.7 441.0,571.4 442.5,569.4 444.0,560.6 445.5,560.2 447.0,560.1 448.5,552.8 450.0,551.1 451.5,548.9 452.0,543.0 453.0,554.8 454.5,559.6 456.0,564.5 457.5,575.9 459.0,571.9 460.5,563.7 462.0,562.7 463.5,569.6 465.0,562.2 466.5,563.8 468.0,567.9 469.5,564.2 471.0,562.9 472.5,567.1 474.0,567.5 475.5,570.4 477.0,568.2 478.5,557.8 480.0,553.4 481.5,555.6 483.0,558.4 484.5,561.7 486.0,562.6 487.5,561.7 489.0,561.6 490.5,559.3 492.0,560.0 493.5,571.6 495.0,568.5 496.5,561.3 498.0,559.2 499.5,555.3 501.0,553.3 502.5,559.6 504.0,566.1 505.5,568.0 507.0,563.4 508.5,554.5 510.0,555.5 511.5,557.7 513.0,558.4 514.5,562.9 516.0,560.4 517.5,559.3 519.0,560.8 520.5,555.8 522.0,559.0 523.5,558.3 525.0,551.6 526.5,553.5 528.0,559.8 529.5,557.8 531.0,561.8 532.5,565.4 534.0,559.6 535.5,551.6 537.0,553.3 538.5,554.5 540.0,556.9 541.5,554.5 543.0,555.8 544.5,562.9 546.0,554.5 547.5,547.1 549.0,543.3 550.5,522.2 552.0,480.6 553.5,517.1 555.0,533.0 556.5,538.1 558.0,542.7 559.5,549.9 561.0,553.8 562.5,553.9 564.0,567.6 565.5,556.7 567.0,554.2 568.5,564.3 570.0,555.2 571.5,551.4 573.0,548.0 574.5,553.4 576.0,554.7 577.5,556.1 579.0,569.6 580.5,557.6 582.0,556.1 583.5,558.3 585.0,554.4 586.5,548.8 588.0,548.1 589.5,543.3 591.0,543.4 592.5,552.4 594.0,552.9 595.5,553.7 597.0,548.9 598.5,547.9 600.0,551.0 601.5,554.9 603.0,552.2 604.5,548.2 606.0,547.6 607.5,547.1 609.0,549.6 610.5,550.3 612.0,552.3 613.5,550.1 615.0,548.7 616.5,553.6 618.0,552.5 619.5,550.0 621.0,547.6 622.5,549.8 624.0,550.8 625.5,546.5 627.0,544.0 628.5,546.5 630.0,546.5 631.5,545.7 633.0,550.9 634.5,558.9 636.0,544.5 637.5,550.1 639.0,561.5 640.5,542.4 642.0,546.7 643.5,542.9 645.0,543.3 646.5,549.0 648.0,546.6 649.5,550.6 651.0,552.9 652.5,547.4 654.0,550.4 655.5,546.8 657.0,544.0 658.5,548.6 660.0,550.7 661.5,548.9 663.0,551.2 664.5,554.0 666.0,549.6 667.5,545.4 669.0,543.8 670.5,539.6 672.0,535.1 673.5,537.0 675.0,546.1 676.5,542.4 678.0,541.0 679.5,536.7 681.0,510.8 682.5,482.8 684.0,419.9 685.5,477.4 687.0,506.1 688.5,527.7 690.0,538.0 691.5,532.7 693.0,534.7 694.5,540.6 696.0,545.0 697.5,543.4 699.0,540.8 700.5,541.9 702.0,540.3 703.5,544.1 705.0,546.8 706.5,541.5 708.0,538.5 709.5,548.9 711.0,548.7 712.5,543.9 714.0,533.8 715.5,526.0 717.0,505.0 718.5,520.5 720.0,528.1 721.5,532.4 723.0,534.9 724.5,539.9 726.0,538.1 727.5,539.4 729.0,539.3 730.5,538.1 732.0,545.1 733.5,543.7 735.0,546.3 736.5,544.5 738.0,542.7 739.5,537.3 741.0,538.9 742.5,542.2 744.0,542.9 745.5,542.3 747.0,541.8 748.5,539.8 750.0,553.6 751.5,535.7 753.0,539.4 754.5,535.4 756.0,533.7 757.5,537.6 759.0,540.6 760.5,540.7 762.0,537.8 763.5,531.3 765.0,536.0 766.5,537.8 768.0,534.9 769.5,537.5 771.0,538.4 772.5,535.2 774.0,537.9 775.5,543.7 777.0,531.5 778.5,527.6 780.0,526.9 781.5,525.0 783.0,507.0 784.5,523.4 786.0,531.5 787.5,536.2 789.0,532.0 790.5,535.2 792.0,536.9 793.5,537.2 795.0,535.5 796.5,536.7 798.0,533.2 799.5,534.0 801.0,534.4 802.5,527.6 804.0,529.2 805.5,528.7 807.0,528.3 808.5,529.3 810.0,527.0 811.5,525.1 813.0,520.3 814.5,518.7 816.0,519.4 817.5,516.6 819.0,521.7 820.5,510.6 822.0,509.9 823.5,505.5 825.0,505.3 826.5,500.7 828.0,491.1 829.5,492.6 831.0,492.3 832.5,492.7 834.0,495.3 835.5,485.8 837.0,482.8 838.5,469.0 840.0,436.0 841.5,463.0 843.0,476.5 844.5,512.0 845.0,512.0 846.0,479.1 847.5,438.0 849.0,350.9 850.5,434.7 852.0,460.1 853.5,452.2 855.0,437.0 856.5,477.7 858.0,481.9 859.0,516.0 859.5,516.0 861.0,488.0 862.5,480.7 864.0,458.8 865.0,443.0 865.5,466.6 867.0,472.4 868.5,491.0 870.0,485.2 871.5,485.1 873.0,483.2 874.5,468.8 876.0,486.5 877.5,485.6 879.0,470.9 880.5,482.1 882.0,485.5 883.5,485.2 885.0,486.7 886.5,487.3 888.0,493.1 889.5,491.1 891.0,477.0 892.5,484.1 894.0,494.6 895.5,483.5 897.0,477.2 898.5,479.6 900.0,475.7 901.5,477.0 903.0,484.1 904.5,484.3 906.0,473.8 907.5,472.3 909.0,465.3 910.5,458.3 912.0,449.1 913.5,404.5 914.0,382.6 915.0,425.8 916.5,445.5 918.0,458.4 919.5,474.3 921.0,481.9 922.5,481.0 924.0,482.4 925.5,481.4 927.0,480.6 928.5,485.6 930.0,483.9 931.5,479.6 933.0,474.7 934.5,469.5 936.0,476.9 937.5,477.4 939.0,475.4 940.5,475.8 942.0,470.2 943.5,475.0 945.0,470.5 946.5,451.5 948.0,429.1 949.5,395.0 951.0,391.0 952.5,398.3 954.0,399.0 955.5,390.5 957.0,386.3 958.5,378.5 960.0,384.2 961.5,378.7 963.0,370.3 964.5,372.1 966.0,373.8 967.5,381.2 969.0,377.0 970.5,353.9 972.0,355.8 973.5,358.5 975.0,334.7 976.5,349.0 978.0,334.7 979.5,289.3 980.0,261.0 981.0,320.6 982.5,364.2 984.0,360.9 985.5,377.4 987.0,365.5 988.5,342.9 990.0,318.1 991.5,344.6 993.0,359.6 994.5,342.2 996.0,337.4 997.5,362.1 999.0,370.8 1000.5,366.7 1002.0,371.1 1003.5,386.1 1005.0,392.6 1006.5,379.2 1008.0,367.2 1009.5,399.2 1011.0,415.3 1012.5,416.2 1014.0,443.7 1015.5,471.5 1017.0,488.6 1018.5,493.1 1020.0,488.1 1021.5,486.8 1023.0,494.8 1024.5,499.2 1026.0,498.8 1027.5,495.7 1029.0,496.9 1030.5,491.6 1032.0,487.8 1033.5,488.6 1035.0,497.9 1036.5,490.9 1038.0,488.2 1039.5,485.8 1041.0,487.0 1042.5,478.5 1044.0,477.7 1045.5,478.7 1047.0,454.0 1048.5,472.2 1050.0,481.9 1051.5,484.9 1053.0,486.1 1054.5,483.7 1056.0,486.9 1057.5,491.0 1059.0,490.4 1060.5,487.1 1062.0,482.4 1063.5,481.8 1065.0,488.3 1066.5,494.8 1068.0,490.6 1069.5,488.0 1071.0,498.0 1072.5,487.2 1074.0,493.4 1075.5,490.7 1077.0,491.5 1078.5,492.3 1080.0,481.4 1081.5,483.2 1083.0,489.6 1084.5,490.3 1086.0,487.9 1087.5,484.2 1089.0,488.4 1090.5,483.2 1092.0,476.5 1093.5,472.6 1095.0,469.4 1096.5,465.5 1098.0,461.8 1099.5,448.8 1101.0,434.3 1102.5,421.4 1104.0,405.6 1105.5,388.7 1107.0,385.0 1108.5,382.5 1110.0,358.9 1111.5,338.0 1113.0,311.2 1114.5,366.9 1116.0,378.3 1117.5,386.1 1119.0,387.9 1120.5,411.0 1122.0,428.0 1123.5,438.9 1125.0,449.0 1126.5,466.0 1128.0,472.9 1129.5,482.5 1131.0,489.7 1132.5,484.6 1134.0,486.0 1135.5,494.9 1137.0,494.0 1138.5,487.0 1140.0,493.9 1141.5,496.6 1143.0,489.0 1144.5,492.6 1146.0,492.8 1147.5,486.6 1149.0,482.2 1150.5,484.4 1152.0,495.8 1153.5,490.1 1155.0,483.3 1156.5,483.5 1158.0,489.1 1159.5,485.5 1161.0,485.3 1162.5,491.4 1164.0,490.6 1165.5,500.4 1167.0,489.6 1168.5,492.7 1170.0,492.5 1171.5,495.2 1173.0,487.7 1174.5,488.0 1176.0,493.5 1177.5,491.8 1179.0,487.0 1180.5,488.2 1182.0,489.5 1183.5,492.4 1185.0,489.2 1186.5,488.0 1188.0,499.0 1189.5,495.2 1191.0,495.7 1192.5,489.6 1194.0,484.6 1195.5,467.0 1197.0,444.6 1198.5,466.7 1200.0,476.7 1201.5,483.7 1203.0,486.3 1204.5,486.8 1206.0,489.4 1207.5,494.8 1209.0,488.9 1210.5,491.6 1212.0,493.1 1213.5,488.8 1215.0,490.8 1216.5,489.2 1218.0,492.4 1219.5,497.0 1221.0,490.3 1222.5,478.7 1224.0,470.2 1225.5,462.0 1227.0,459.1 1228.5,442.2 1230.0,432.6 1231.5,416.5 1233.0,403.1 1234.0,390.1 1234.5,391.2 1236.0,396.2 1237.5,398.7 1239.0,400.1 1240.5,401.4 1242.0,397.8 1243.5,386.8 1245.0,337.9 1246.0,272.9 1246.5,305.2 1248.0,371.1 1249.5,386.6 1251.0,399.2 1252.5,404.3 1254.0,397.7 1255.0,395.6 1255.5,402.9 1257.0,419.0 1258.5,437.3 1260.0,456.3 1261.5,466.6 1263.0,472.5 1264.5,479.2 1266.0,481.0 1267.5,487.1 1269.0,493.0 1270.5,490.9 1272.0,485.5 1273.5,488.5 1275.0,496.1 1276.5,495.1 1278.0,487.2 1279.5,487.0 1281.0,490.4 1282.5,487.9 1284.0,501.4 1285.5,498.1 1287.0,493.5 1288.5,489.1 1290.0,490.2 1291.5,495.3 1293.0,491.1 1294.5,499.6 1296.0,497.1 1297.5,491.3 1299.0,494.8 1300.5,491.0 1302.0,488.8 1303.5,492.6 1305.0,499.2 1306.5,486.1 1308.0,489.8 1309.5,488.3 1311.0,484.3 1312.5,486.7 1314.0,491.0 1315.5,491.9 1317.0,491.9 1318.5,492.2 1320.0,485.2 1321.5,485.7 1323.0,488.6 1324.5,490.6 1326.0,493.6 1327.5,486.0 1329.0,485.3 1330.5,491.0 1332.0,467.7 1333.5,441.6 1334.0,423.0 1335.0,454.7 1336.5,476.8 1338.0,482.1 1339.5,473.3 1341.0,464.3 1342.5,448.8 1344.0,398.8 1345.0,326.0 1345.5,373.0 1347.0,431.5 1348.5,458.3 1350.0,471.4 1351.5,473.3 1353.0,469.0 1354.5,459.4 1356.0,424.6 1357.5,461.1 1359.0,478.7 1360.5,483.9 1362.0,488.6 1363.5,490.3 1365.0,490.0 1366.5,489.0 1368.0,487.9 1369.5,487.6 1371.0,489.3 1372.5,485.0 1374.0,476.9 1375.5,468.0 1377.0,441.3 1378.0,407.7 1378.5,430.1 1380.0,462.0 1381.5,474.7 1383.0,485.6 1384.5,486.4 1386.0,482.7 1387.5,485.1 1389.0,483.4 1390.5,483.8 1392.0,485.5 1393.5,480.1 1395.0,475.5 1396.5,458.7 1398.0,429.0 1399.5,468.2 1401.0,479.5 1402.5,487.0 1404.0,490.4 1405.5,486.9 1407.0,474.9 1408.5,460.9 1410.0,438.4 1411.0,407.1 1411.5,429.0 1413.0,466.2 1414.5,478.9 1416.0,478.1 1417.5,482.3 1419.0,485.5 1420.5,480.0 1422.0,494.7 1423.5,484.4 1425.0,485.8 1426.5,488.3 1428.0,488.6 1429.5,491.0 1431.0,489.1 1432.5,484.5 1434.0,485.5 1435.5,497.0 1437.0,491.9 1438.5,492.1 1440.0,489.3 1441.5,489.6 1443.0,488.9 1444.5,488.0 1446.0,492.1 1447.5,495.1 1449.0,492.3 1450.5,485.7 1452.0,486.8 1453.5,489.1 1455.0,490.5 1456.5,490.1 1458.0,495.7 1459.5,480.9 1461.0,484.3 1462.5,478.0 1464.0,458.0 1465.0,440.2 1465.5,450.8 1467.0,470.2 1468.5,477.9 1470.0,481.3 1471.5,480.8 1473.0,475.9 1474.5,461.0 1476.0,428.0 1477.0,384.4 1477.5,419.0 1479.0,455.0 1480.5,473.4 1482.0,482.0 1483.5,487.9 1485.0,490.9 1486.5,486.9 1488.0,489.0 1489.5,488.5 1491.0,492.2 1492.5,494.8 1494.0,492.7 1495.5,491.8 1497.0,489.9 1498.5,491.0 1500.0,491.4 1501.5,492.3 1503.0,486.0 1504.5,484.9 1506.0,490.9 1507.5,487.9 1509.0,489.0 1510.5,490.2 1512.0,492.3 1513.5,490.1 1515.0,483.7 1516.5,489.5 1518.0,483.5 1519.5,489.1 1521.0,488.1 1522.5,488.8 1524.0,486.0 1525.5,495.8 1527.0,487.8 1528.5,490.6 1530.0,486.8 1531.5,484.2 1533.0,486.9 1534.5,503.5 1536.0,490.4 1537.5,485.7 1539.0,480.0 1540.5,467.8 1542.0,446.8 1543.0,418.0 1543.5,434.1 1545.0,461.7 1546.5,473.4 1548.0,479.2 1549.5,477.7 1551.0,482.9 1552.5,492.1 1554.0,489.2 1555.5,486.4 1557.0,486.1 1558.5,490.9 1560.0,492.2 1561.5,489.2 1563.0,488.7 1564.5,484.3 1566.0,486.3 1567.5,490.2 1569.0,495.6 1570.5,489.2 1572.0,476.4 1573.5,467.2 1575.0,444.0 1576.0,408.5 1576.5,426.5 1578.0,457.1 1579.5,480.3 1581.0,484.5 1582.5,481.0 1584.0,488.4 1585.5,492.1 1587.0,485.8 1588.5,481.0 1590.0,482.2 1591.5,487.2 1593.0,487.9 1594.5,486.3 1596.0,487.3 1597.5,484.2 1599.0,485.6 1600.5,488.4 1602.0,489.1 1603.5,487.9 1605.0,476.1 1606.5,458.6 1608.0,422.1 1609.0,374.0 1609.5,400.9 1611.0,446.8 1612.5,466.4 1614.0,475.5 1615.5,480.8 1617.0,488.3 1618.5,485.2 1620.0,480.4 1621.5,479.4 1623.0,478.9 1624.5,473.5 1626.0,451.0 1627.5,469.3 1629.0,474.7 1630.5,477.5 1632.0,485.4 1633.5,488.1 1635.0,484.8 1636.5,485.9 1638.0,484.7 1639.5,486.0 1641.0,485.6 1642.5,486.3 1644.0,486.4 1645.5,483.8 1647.0,482.9 1648.5,485.8 1650.0,492.2 1651.5,488.6 1653.0,486.1 1654.5,489.4 1656.0,493.6 1657.5,490.5 1659.0,489.9 1660.5,488.1 1662.0,482.5 1663.5,468.8 1664.0,456.0 1665.0,471.3 1666.5,483.4 1668.0,485.9 1669.5,486.8 1671.0,487.1 1672.5,489.6 1674.0,489.9 1675.5,490.3 1677.0,511.9 1678.5,496.6 1680.0,497.8 1681.5,497.9 1683.0,497.5 1684.5,496.6 1686.0,493.5 1687.5,503.4 1689.0,514.2 1690.5,508.9 1692.0,503.2 1693.5,501.7 1695.0,502.5 1696.5,508.8 1698.0,506.0 1699.5,502.4 1701.0,505.9 1702.5,503.0 1704.0,493.4 1705.5,491.1 1707.0,474.3 1708.0,436.0 1708.5,453.7 1710.0,486.9 1711.5,500.6 1713.0,505.5 1714.5,513.6 1716.0,520.6 1717.5,520.1 1719.0,521.3 1720.5,528.5 1722.0,523.2 1723.5,524.0 1725.0,526.7 1726.5,522.9 1728.0,524.0 1729.5,529.3 1731.0,534.7 1732.5,522.4 1734.0,536.4 1735.5,533.9 1737.0,527.9 1738.5,516.2 1740.0,515.1 1741.5,516.8 1743.0,523.6 1744.5,527.7 1746.0,531.8 1747.5,541.7 1749.0,543.8 1750.5,527.2 1752.0,532.3 1753.5,535.7 1755.0,533.3 1756.5,531.8 1758.0,529.3 1759.5,533.4 1761.0,538.1 1762.5,533.9 1764.0,526.4 1765.5,525.4 1767.0,530.4 1768.5,531.1 1770.0,522.1 1771.5,510.6 1773.0,498.4 1774.0,483.0 1774.5,497.4 1776.0,515.0 1777.5,521.3 1779.0,529.4 1780.5,535.3 1782.0,539.3 1783.5,533.3 1785.0,528.2 1786.5,531.6 1788.0,533.0 1789.5,534.7 1791.0,535.0 1792.5,533.6 1794.0,533.3 1795.5,534.7 1797.0,533.0 1798.5,530.5 1800.0,530.9 1801.5,533.5 1803.0,538.4 1804.5,538.8 1806.0,535.0 1807.5,536.5 1809.0,539.8 1810.5,539.5 1812.0,537.8 1813.5,539.6 1815.0,541.7 1816.5,544.7 1818.0,538.4 1819.5,532.7 1821.0,533.4 1822.5,538.5 1824.0,547.9 1825.5,545.3 1827.0,537.9 1828.5,530.9 1830.0,531.0 1831.5,539.6 1833.0,543.8 1834.5,543.3 1836.0,543.6 1837.5,542.3 1839.0,538.6 1840.5,541.1 1842.0,544.2 1843.5,538.7 1845.0,536.5 1846.5,542.5 1848.0,549.1 1849.5,545.7 1851.0,543.2 1852.5,541.8 1854.0,545.0 1855.5,548.1 1857.0,539.9 1858.5,538.0 1860.0,542.7 1861.5,549.1 1863.0,549.5 1864.5,542.0 1866.0,537.7 1867.5,541.6 1869.0,541.7 1870.5,541.4 1872.0,548.6 1873.5,547.8 1875.0,542.8 1876.5,542.3 1878.0,544.9 1879.5,543.7 1881.0,545.1 1882.5,549.4 1884.0,551.0 1885.5,548.8 1887.0,547.8 1888.5,546.1 1890.0,546.8 1891.5,549.4 1893.0,550.4 1894.5,551.7 1896.0,553.0 1897.5,548.2 1899.0,540.9 1900.5,544.4 1902.0,541.1 1903.5,523.7 1905.0,507.7 1906.0,487.0 1906.5,500.9 1908.0,525.5 1909.5,538.2 1911.0,542.5 1912.5,541.7 1914.0,545.3 1915.5,548.6 1917.0,548.9 1918.5,551.3 1920.0,552.1 1921.5,550.9 1923.0,545.6 1924.5,547.1 1926.0,552.4 1927.5,551.0 1929.0,552.7 1930.5,545.1 1932.0,547.5 1933.5,560.8 1935.0,551.2 1936.5,545.1 1938.0,551.2 1939.5,554.2 1941.0,550.8 1942.5,551.4 1944.0,554.9 1945.5,555.5 1947.0,545.4 1948.5,545.7 1950.0,549.6 1951.5,564.5 1953.0,554.2 1954.5,549.9 1956.0,549.5 1957.5,549.5 1959.0,549.8 1960.5,553.2 1962.0,550.6 1963.5,548.6 1965.0,552.9 1966.5,555.4 1968.0,560.3 1969.5,560.8 1971.0,556.8 1972.5,553.2 1974.0,556.5 1975.5,558.9 1977.0,551.8 1978.5,554.2 1980.0,557.8 1981.5,562.4 1983.0,564.4 1984.5,556.9 1986.0,549.8 1987.5,546.8 1989.0,556.8 1990.5,562.4 1992.0,555.0 1993.5,553.7 1995.0,561.4 1996.5,566.9 1998.0,564.4 1999.5,558.5 2001.0,561.5 2002.5,560.3 2004.0,560.0 2005.5,559.5 2007.0,558.8 2008.5,561.0 2010.0,574.1 2011.5,559.7 2013.0,560.6 2014.5,573.4 2016.0,565.4 2017.5,563.8 2019.0,561.6 2020.5,560.8 2022.0,563.7 2023.5,562.0 2025.0,565.1 2026.5,567.7 2028.0,568.0 2029.5,561.4 2031.0,555.3 2032.5,562.4 2034.0,563.5 2035.5,563.2 2037.0,567.9 2038.5,570.6 2040.0,569.5 2041.5,565.6 2043.0,568.1 2044.5,566.7 2046.0,567.8 2047.5,566.4 2049.0,567.7 2050.5,571.9 2052.0,580.4 2053.5,567.8 2055.0,567.7 2056.5,574.0 2058.0,566.2 2059.5,568.9 2061.0,577.9 2062.5,578.8 2064.0,580.0 2065.5,583.4 2067.0,567.6 2068.5,568.1 2070.0,569.9 2071.5,584.3" fill="none" stroke="#ececec" stroke-width="1.5"/></svg>
<svg class="a" style="left:1088px;top:216px" width="52" height="368" viewBox="1088 216 52 368"><defs><linearGradient id="mb" x1="0" y1="0" x2="0" y2="1"><stop offset="0" stop-color="#008000" stop-opacity="0.85"/><stop offset="0.45" stop-color="#1a6a1a" stop-opacity="0.6"/><stop offset="1" stop-color="#3a3a3a" stop-opacity="0.6"/></linearGradient><linearGradient id="mt" x1="0" x2="1"><stop offset="0" stop-color="#10c010"/><stop offset="0.5" stop-color="#70ff70"/><stop offset="1" stop-color="#10c010"/></linearGradient></defs><rect x="1090" y="218" width="48" height="362" fill="url(#mb)" stroke="#50d850" stroke-width="1.5"/><rect x="1090" y="218" width="48" height="9" fill="url(#mt)"/><rect x="1090" y="572" width="48" height="8" fill="url(#mt)" opacity="0.7"/><path d="M1091 272H1137" stroke="#60e060" stroke-width="1.5"/><path d="M1114 227V572" stroke="#90e090" stroke-width="1" stroke-dasharray="3 4"/><rect x="1102" y="231" width="24" height="25" rx="3" fill="#004a00" opacity="0.8"/><text x="1114" y="250" font-size="15" fill="#eee" text-anchor="middle" font-family="Liberation Sans">1</text></svg>
<div class="a" style="left:420px;top:585px;width:1652px;height:15px;background:linear-gradient(#5c5c5c,#2c2c2c);border-top:1px solid #c8c8c8"></div>
<svg class="a" style="left:420px;top:585px" width="1652" height="10" viewBox="420 585 1652 10"><path d="M435.5 586V590" stroke="#ddd" stroke-width="1.2"/><path d="M452.0 586V593" stroke="#ddd" stroke-width="1.2"/><path d="M468.5 586V590" stroke="#ddd" stroke-width="1.2"/><path d="M485.1 586V590" stroke="#ddd" stroke-width="1.2"/><path d="M501.6 586V590" stroke="#ddd" stroke-width="1.2"/><path d="M518.1 586V590" stroke="#ddd" stroke-width="1.2"/><path d="M534.6 586V590" stroke="#ddd" stroke-width="1.2"/><path d="M551.2 586V590" stroke="#ddd" stroke-width="1.2"/><path d="M567.7 586V590" stroke="#ddd" stroke-width="1.2"/><path d="M584.2 586V590" stroke="#ddd" stroke-width="1.2"/><path d="M600.8 586V590" stroke="#ddd" stroke-width="1.2"/><path d="M617.3 586V593" stroke="#ddd" stroke-width="1.2"/><path d="M633.8 586V590" stroke="#ddd" stroke-width="1.2"/><path d="M650.4 586V590" stroke="#ddd" stroke-width="1.2"/><path d="M666.9 586V590" stroke="#ddd" stroke-width="1.2"/><path d="M683.4 586V590" stroke="#ddd" stroke-width="1.2"/><path d="M700.0 586V590" stroke="#ddd" stroke-width="1.2"/><path d="M716.5 586V590" stroke="#ddd" stroke-width="1.2"/><path d="M733.0 586V590" stroke="#ddd" stroke-width="1.2"/><path d="M749.5 586V590" stroke="#ddd" stroke-width="1.2"/><path d="M766.1 586V590" stroke="#ddd" stroke-width="1.2"/><path d="M782.6 586V593" stroke="#ddd" stroke-width="1.2"/><path d="M799.1 586V590" stroke="#ddd" stroke-width="1.2"/><path d="M815.7 586V590" stroke="#ddd" stroke-width="1.2"/><path d="M832.2 586V590" stroke="#ddd" stroke-width="1.2"/><path d="M848.7 586V590" stroke="#ddd" stroke-width="1.2"/><path d="M865.2 586V590" stroke="#ddd" stroke-width="1.2"/><path d="M881.8 586V590" stroke="#ddd" stroke-width="1.2"/><path d="M898.3 586V590" stroke="#ddd" stroke-width="1.2"/><path d="M914.8 586V590" stroke="#ddd" stroke-width="1.2"/><path d="M931.4 586V590" stroke="#ddd" stroke-width="1.2"/><path d="M947.9 586V593" stroke="#ddd" stroke-width="1.2"/><path d="M964.4 586V590" stroke="#ddd" stroke-width="1.2"/><path d="M981.0 586V590" stroke="#ddd" stroke-width="1.2"/><path d="M997.5 586V590" stroke="#ddd" stroke-width="1.2"/><path d="M1014.0 586V590" stroke="#ddd" stroke-width="1.2"/><path d="M1030.5 586V590" stroke="#ddd" stroke-width="1.2"/><path d="M1047.1 586V590" stroke="#ddd" stroke-width="1.2"/><path d="M1063.6 586V590" stroke="#ddd" stroke-width="1.2"/><path d="M1080.1 586V590" stroke="#ddd" stroke-width="1.2"/><path d="M1096.7 586V590" stroke="#ddd" stroke-width="1.2"/><path d="M1113.2 586V593" stroke="#ddd" stroke-width="1.2"/><path d="M1129.7 586V590" stroke="#ddd" stroke-width="1.2"/><path d="M1146.3 586V590" stroke="#ddd" stroke-width="1.2"/><path d="M1162.8 586V590" stroke="#ddd" stroke-width="1.2"/><path d="M1179.3 586V590" stroke="#ddd" stroke-width="1.2"/><path d="M1195.8 586V590" stroke="#ddd" stroke-width="1.2"/><path d="M1212.4 586V590" stroke="#ddd" stroke-width="1.2"/><path d="M1228.9 586V590" stroke="#ddd" stroke-width="1.2"/><path d="M1245.4 586V590" stroke="#ddd" stroke-width="1.2"/><path d="M1262.0 586V590" stroke="#ddd" stroke-width="1.2"/><path d="M1278.5 586V593" stroke="#ddd" stroke-width="1.2"/><path d="M1295.0 586V590" stroke="#ddd" stroke-width="1.2"/><path d="M1311.6 586V590" stroke="#ddd" stroke-width="1.2"/><path d="M1328.1 586V590" stroke="#ddd" stroke-width="1.2"/><path d="M1344.6 586V590" stroke="#ddd" stroke-width="1.2"/><path d="M1361.2 586V590" stroke="#ddd" stroke-width="1.2"/><path d="M1377.7 586V590" stroke="#ddd" stroke-width="1.2"/><path d="M1394.2 586V590" stroke="#ddd" stroke-width="1.2"/><path d="M1410.7 586V590" stroke="#ddd" stroke-width="1.2"/><path d="M1427.3 586V590" stroke="#ddd" stroke-width="1.2"/><path d="M1443.8 586V593" stroke="#ddd" stroke-width="1.2"/><path d="M1460.3 586V590" stroke="#ddd" stroke-width="1.2"/><path d="M1476.9 586V590" stroke="#ddd" stroke-width="1.2"/><path d="M1493.4 586V590" stroke="#ddd" stroke-width="1.2"/><path d="M1509.9 586V590" stroke="#ddd" stroke-width="1.2"/><path d="M1526.5 586V590" stroke="#ddd" stroke-width="1.2"/><path d="M1543.0 586V590" stroke="#ddd" stroke-width="1.2"/><path d="M1559.5 586V590" stroke="#ddd" stroke-width="1.2"/><path d="M1576.0 586V590" stroke="#ddd" stroke-width="1.2"/><path d="M1592.6 586V590" stroke="#ddd" stroke-width="1.2"/><path d="M1609.1 586V593" stroke="#ddd" stroke-width="1.2"/><path d="M1625.6 586V590" stroke="#ddd" stroke-width="1.2"/><path d="M1642.2 586V590" stroke="#ddd" stroke-width="1.2"/><path d="M1658.7 586V590" stroke="#ddd" stroke-width="1.2"/><path d="M1675.2 586V590" stroke="#ddd" stroke-width="1.2"/><path d="M1691.8 586V590" stroke="#ddd" stroke-width="1.2"/><path d="M1708.3 586V590" stroke="#ddd" stroke-width="1.2"/><path d="M1724.8 586V590" stroke="#ddd" stroke-width="1.2"/><path d="M1741.3 586V590" stroke="#ddd" stroke-width="1.2"/><path d="M1757.9 586V590" stroke="#ddd" stroke-width="1.2"/><path d="M1774.4 586V593" stroke="#ddd" stroke-width="1.2"/><path d="M1790.9 586V590" stroke="#ddd" stroke-width="1.2"/><path d="M1807.5 586V590" stroke="#ddd" stroke-width="1.2"/><path d="M1824.0 586V590" stroke="#ddd" stroke-width="1.2"/><path d="M1840.5 586V590" stroke="#ddd" stroke-width="1.2"/><path d="M1857.0 586V590" stroke="#ddd" stroke-width="1.2"/><path d="M1873.6 586V590" stroke="#ddd" stroke-width="1.2"/><path d="M1890.1 586V590" stroke="#ddd" stroke-width="1.2"/><path d="M1906.6 586V590" stroke="#ddd" stroke-width="1.2"/><path d="M1923.2 586V590" stroke="#ddd" stroke-width="1.2"/><path d="M1939.7 586V593" stroke="#ddd" stroke-width="1.2"/><path d="M1956.2 586V590" stroke="#ddd" stroke-width="1.2"/><path d="M1972.8 586V590" stroke="#ddd" stroke-width="1.2"/><path d="M1989.3 586V590" stroke="#ddd" stroke-width="1.2"/><path d="M2005.8 586V590" stroke="#ddd" stroke-width="1.2"/><path d="M2022.4 586V590" stroke="#ddd" stroke-width="1.2"/><path d="M2038.9 586V590" stroke="#ddd" stroke-width="1.2"/><path d="M2055.4 586V590" stroke="#ddd" stroke-width="1.2"/><path d="M2071.9 586V590" stroke="#ddd" stroke-width="1.2"/></svg>
<div class="a" style="left:420px;top:600px;width:1652px;height:15px;background:#000"></div>
<div class="t c" style="left:412.0px;width:80px;top:596px;font-size:15px;color:#f0f0f0">950</div>
<div class="t c" style="left:577.3px;width:80px;top:596px;font-size:15px;color:#f0f0f0">1.000</div>
<div class="t c" style="left:742.6px;width:80px;top:596px;font-size:15px;color:#f0f0f0">1.050</div>
<div class="t c" style="left:907.9px;width:80px;top:596px;font-size:15px;color:#f0f0f0">1.100</div>
<div class="t c" style="left:1073.2px;width:80px;top:596px;font-size:15px;color:#f0f0f0">1.150</div>
<div class="t c" style="left:1238.5px;width:80px;top:596px;font-size:15px;color:#f0f0f0">1.200</div>
<div class="t c" style="left:1403.8px;width:80px;top:596px;font-size:15px;color:#f0f0f0">1.250</div>
<div class="t c" style="left:1569.1px;width:80px;top:596px;font-size:15px;color:#f0f0f0">1.300</div>
<div class="t c" style="left:1734.4px;width:80px;top:596px;font-size:15px;color:#f0f0f0">1.350</div>
<div class="t c" style="left:1899.7px;width:80px;top:596px;font-size:15px;color:#f0f0f0">1.400</div>
<div class="a" style="left:420px;top:615px;width:1652px;height:6px;background:#f2f2f2"></div>
<svg class="a" style="left:1214px;top:616px" width="64" height="3"><path d="M0 1.5H64" stroke="#777" stroke-width="1.5" stroke-dasharray="1.5 2"/></svg>
<svg class="a" style="left:420px;top:621px" width="1652" height="704" viewBox="420 621 1652 704"><defs><linearGradient id="wg" gradientUnits="userSpaceOnUse" x1="420" y1="0" x2="2072" y2="0"><stop offset="0.0000" stop-color="#000020"/><stop offset="0.2373" stop-color="#000022"/><stop offset="0.2409" stop-color="#04082e"/><stop offset="0.2772" stop-color="#0a1046"/><stop offset="0.2821" stop-color="#151e50"/><stop offset="0.2936" stop-color="#1d2a62"/><stop offset="0.3087" stop-color="#293a80"/><stop offset="0.3190" stop-color="#2f4086"/><stop offset="0.3608" stop-color="#2f4084"/><stop offset="0.4056" stop-color="#314286"/><stop offset="0.4358" stop-color="#2d3e80"/><stop offset="0.4782" stop-color="#2f4082"/><stop offset="0.5206" stop-color="#314284"/><stop offset="0.5932" stop-color="#334486"/><stop offset="0.6659" stop-color="#354688"/><stop offset="0.7022" stop-color="#37488a"/><stop offset="0.7385" stop-color="#314282"/><stop offset="0.7518" stop-color="#2e3e80"/><stop offset="0.7548" stop-color="#232d6c"/><stop offset="0.7748" stop-color="#131a4a"/><stop offset="0.7803" stop-color="#0c1040"/><stop offset="0.7869" stop-color="#080a34"/><stop offset="0.8021" stop-color="#02032a"/><stop offset="0.8172" stop-color="#000022"/><stop offset="1.0000" stop-color="#000022"/></linearGradient><filter id="wn" x="0" y="0" width="100%" height="100%"><feTurbulence type="fractalNoise" baseFrequency="0.85" numOctaves="1" seed="2"/><feColorMatrix values="0 0 0 0 0.5  0 0 0 0 0.56  0 0 0 0 0.9  0 0 0 1.9 -0.78"/></filter><filter id="wd" x="0" y="0" width="100%" height="100%"><feTurbulence type="fractalNoise" baseFrequency="0.75" numOctaves="1" seed="9"/><feColorMatrix values="0 0 0 0 0.03  0 0 0 0 0.04  0 0 0 0 0.22  0 0 0 1.9 -0.74"/></filter><filter id="st" x="0" y="0" width="100%" height="100%"><feTurbulence type="fractalNoise" baseFrequency="0.1 0.55" numOctaves="2" seed="5"/><feColorMatrix values="0 0 0 0 0.82  0 0 0 0 0.88  0 0 0 0 1  0 0 0 3.4 -1.42"/></filter><filter id="st2" x="0" y="0" width="100%" height="100%"><feTurbulence type="fractalNoise" baseFrequency="0.14 0.6" numOctaves="2" seed="8"/><feColorMatrix values="0 0 0 0 0.9  0 0 0 0 0.94  0 0 0 0 1  0 0 0 3.6 -1.55"/></filter><filter id="st3" x="0" y="0" width="100%" height="100%"><feTurbulence type="fractalNoise" baseFrequency="0.2 0.6" numOctaves="1" seed="15"/><feColorMatrix values="0 0 0 0 0.55  0 0 0 0 0.62  0 0 0 0 1  0 0 0 4 -2.0"/></filter><linearGradient id="hz" x1="0" x2="1"><stop offset="0" stop-color="#6a80d0" stop-opacity="0"/><stop offset="0.45" stop-color="#6a80d0" stop-opacity="0.18"/><stop offset="0.7" stop-color="#6a80d0" stop-opacity="0.12"/><stop offset="1" stop-color="#6a80d0" stop-opacity="0"/></linearGradient><filter id="sl" x="0" y="0" width="100%" height="100%"><feTurbulence type="fractalNoise" baseFrequency="0.06 0.7" numOctaves="2" seed="41"/><feColorMatrix values="0 0 0 0 0.86  0 0 0 0 0.9  0 0 0 0 1  0 0 0 4.2 -1.85"/></filter><filter id="sl2" x="0" y="0" width="100%" height="100%"><feTurbulence type="fractalNoise" baseFrequency="0.09 0.8" numOctaves="2" seed="43"/><feColorMatrix values="0 0 0 0 0.9  0 0 0 0 0.94  0 0 0 0 1  0 0 0 4.5 -2.0"/></filter><linearGradient id="whg" x1="0" x2="1"><stop offset="0" stop-color="#fff" stop-opacity="0.35"/><stop offset="0.4" stop-color="#fff" stop-opacity="1"/><stop offset="0.6" stop-color="#fff" stop-opacity="1"/><stop offset="1" stop-color="#fff" stop-opacity="0.35"/></linearGradient><mask id="wmk" maskContentUnits="objectBoundingBox"><rect width="1" height="1" fill="url(#whg)"/></mask></defs><rect x="420" y="621" width="1652" height="704" fill="url(#wg)"/><rect x="880" y="621" width="830" height="704" filter="url(#wn)" opacity="0.3"/><rect x="880" y="621" width="830" height="704" filter="url(#wd)" opacity="0.9"/><rect x="948" y="621" width="67" height="704" fill="#f2f4ff"/><rect x="948" y="621" width="67" height="704" filter="url(#st3)" opacity="0.22"/><rect x="818" y="621" width="64" height="704" fill="#24348a" opacity="0.3"/><g mask="url(#wmk)"><rect x="818" y="621" width="64" height="704" filter="url(#sl)" opacity="0.6"/></g><g mask="url(#wmk)"><rect x="832" y="621" width="36" height="704" filter="url(#sl2)" opacity="0.55"/></g><rect x="842" y="621" width="15" height="704" fill="#a0b0ff" opacity="0.12"/><rect x="1092" y="621" width="44" height="704" fill="#4a5cb8" opacity="0.35"/><g mask="url(#wmk)"><rect x="1092" y="621" width="44" height="704" filter="url(#sl)" opacity="1.0"/></g><g mask="url(#wmk)"><rect x="1098" y="621" width="32" height="704" filter="url(#sl2)" opacity="0.9"/></g><rect x="1213" y="621" width="65" height="704" fill="#4456b0" opacity="0.25"/><g mask="url(#wmk)"><rect x="1213" y="621" width="66" height="704" filter="url(#sl)" opacity="1.0"/></g><g mask="url(#wmk)"><rect x="1226" y="621" width="40" height="704" filter="url(#sl2)" opacity="0.9"/></g><rect x="1236" y="621" width="20" height="704" fill="#b0c0ff" opacity="0.18"/><rect x="1332" y="621" width="26" height="704" fill="#6070c8" opacity="0.5"/><rect x="1332" y="621" width="26" height="704" filter="url(#st)" opacity="0.85"/><g mask="url(#wmk)"><rect x="1332" y="621" width="26" height="704" filter="url(#sl2)" opacity="0.9"/></g><rect x="686" y="621" width="22" height="704" filter="url(#st3)" opacity="0.18"/><rect x="1500" y="621" width="166" height="704" fill="url(#hz)"/><g mask="url(#wmk)"><rect x="1604" y="621" width="36" height="704" filter="url(#sl2)" opacity="0.35"/></g><rect x="1666" y="621" width="42" height="704" filter="url(#wn)" opacity="0.18"/><rect x="818" y="636" width="64" height="6" fill="#1a2668" opacity="0.45"/><rect x="818" y="729" width="64" height="8" fill="#1a2668" opacity="0.45"/><rect x="818" y="805" width="64" height="6" fill="#1a2668" opacity="0.45"/><rect x="818" y="872" width="64" height="9" fill="#1a2668" opacity="0.45"/><rect x="818" y="972" width="64" height="9" fill="#1a2668" opacity="0.45"/><rect x="818" y="1077" width="64" height="4" fill="#1a2668" opacity="0.45"/><rect x="818" y="1181" width="64" height="7" fill="#1a2668" opacity="0.45"/><rect x="818" y="1251" width="64" height="9" fill="#1a2668" opacity="0.45"/><rect x="818" y="1291" width="64" height="3" fill="#1a2668" opacity="0.45"/><rect x="1092" y="660" width="44" height="7" fill="#1a2668" opacity="0.45"/><rect x="1092" y="754" width="44" height="3" fill="#1a2668" opacity="0.45"/><rect x="1092" y="812" width="44" height="9" fill="#1a2668" opacity="0.45"/><rect x="1092" y="881" width="44" height="4" fill="#1a2668" opacity="0.45"/><rect x="1092" y="926" width="44" height="6" fill="#1a2668" opacity="0.45"/><rect x="1092" y="1018" width="44" height="7" fill="#1a2668" opacity="0.45"/><rect x="1092" y="1114" width="44" height="3" fill="#1a2668" opacity="0.45"/><rect x="1092" y="1196" width="44" height="7" fill="#1a2668" opacity="0.45"/><rect x="1092" y="1299" width="44" height="8" fill="#1a2668" opacity="0.45"/><rect x="1213" y="651" width="65" height="5" fill="#1a2668" opacity="0.45"/><rect x="1213" y="693" width="65" height="4" fill="#1a2668" opacity="0.45"/><rect x="1213" y="744" width="65" height="3" fill="#1a2668" opacity="0.45"/><rect x="1213" y="786" width="65" height="6" fill="#1a2668" opacity="0.45"/><rect x="1213" y="846" width="65" height="7" fill="#1a2668" opacity="0.45"/><rect x="1213" y="929" width="65" height="6" fill="#1a2668" opacity="0.45"/><rect x="1213" y="1031" width="65" height="4" fill="#1a2668" opacity="0.45"/><rect x="1213" y="1094" width="65" height="8" fill="#1a2668" opacity="0.45"/><rect x="1213" y="1138" width="65" height="6" fill="#1a2668" opacity="0.45"/><rect x="1213" y="1208" width="65" height="3" fill="#1a2668" opacity="0.45"/><rect x="1213" y="1273" width="65" height="4" fill="#1a2668" opacity="0.45"/><defs><radialGradient id="bl" cx="0.5" cy="0.3" r="0.7"><stop offset="0" stop-color="#f4f6ff"/><stop offset="0.55" stop-color="#d0dbff"/><stop offset="1" stop-color="#90a4ec"/></radialGradient></defs><path d="M1216 1184V1090Q1216 1060 1246 1058Q1276 1060 1276 1090V1184Z" fill="url(#bl)" opacity="0.92"/><rect x="1214" y="1060" width="64" height="124" filter="url(#st2)" opacity="0.5"/><rect x="1312" y="1285" width="68" height="40" fill="#7088d8" opacity="0.75"/><rect x="1312" y="1285" width="68" height="40" filter="url(#st)" opacity="0.8"/><path d="M552 621V1325" stroke="#5a6098" stroke-width="1.2"/><path d="M684 621V1325" stroke="#c0ccff" stroke-width="1.6"/><path d="M717 621V1325" stroke="#4a5290" stroke-width="1"/><path d="M784 621V1325" stroke="#4a5290" stroke-width="1"/><path d="M849.5 621V1325" stroke="#e8eeff" stroke-width="2"/><path d="M916 621V1325" stroke="#8aa0f0" stroke-width="1.2"/><path d="M930 621V1325" stroke="#6a80d0" stroke-width="1"/><path d="M1047 621V1325" stroke="#9ab0ff" stroke-width="1.2"/><path d="M1063 621V1325" stroke="#7a90e0" stroke-width="1"/><path d="M1081 621V1325" stroke="#6a80d0" stroke-width="1"/><path d="M1130 621V1325" stroke="#8aa0f0" stroke-width="1"/><path d="M1197 621V1325" stroke="#b0c0ff" stroke-width="1.2"/><path d="M1265 621V1325" stroke="#8aa0f0" stroke-width="1"/><path d="M1280 621V1325" stroke="#6a80d0" stroke-width="1"/><path d="M1378 621V1325" stroke="#aabcff" stroke-width="1.2"/><path d="M1399 621V1325" stroke="#7a90e0" stroke-width="1"/><path d="M1411.5 621V1325" stroke="#c0ccff" stroke-width="1.5"/><path d="M1477 621V1325" stroke="#e0e8ff" stroke-width="1.8"/><path d="M1543 621V1325" stroke="#9ab0ff" stroke-width="1.2"/><path d="M1576 621V1325" stroke="#9ab0ff" stroke-width="1.2"/><path d="M1533 621V1325" stroke="#6a80d0" stroke-width="1"/><path d="M1599.5 621V1325" stroke="#7a90e0" stroke-width="1"/><path d="M1609.5 621V1325" stroke="#e8eeff" stroke-width="1.8"/><path d="M1666 621V1325" stroke="#8aa0f0" stroke-width="1.2"/><path d="M1708 621V1325" stroke="#b0c0ff" stroke-width="1.4"/><path d="M1733 621V1325" stroke="#262c68" stroke-width="1"/><path d="M1774 621V1325" stroke="#5a62a0" stroke-width="1.2"/><path d="M1906 621V1325" stroke="#5a62a0" stroke-width="1.2"/><path d="M981 621V1325" stroke="#f2f23a" stroke-width="2.4"/><path d="M1114 621V1325" stroke="#f2f23a" stroke-width="2.4"/><path d="M1246 621V1325" stroke="#f2f23a" stroke-width="2.4"/><path d="M1345 621V1325" stroke="#f2f23a" stroke-width="2.4"/><rect x="1840" y="1145" width="217" height="163" rx="8" fill="#000010" opacity="0.75"/><text x="1857" y="1174.5" font-size="14" fill="#f0f0f0" font-family="Liberation Mono" xml:space="preserve">FFT Size ....: 32 k</text><text x="1857" y="1196.9" font-size="14" fill="#f0f0f0" font-family="Liberation Mono" xml:space="preserve">Overlap .....: 23 %</text><text x="1857" y="1219.3" font-size="14" fill="#f0f0f0" font-family="Liberation Mono" xml:space="preserve">Line rate ...: 10 /s</text><text x="1857" y="1241.7" font-size="14" fill="#f0f0f0" font-family="Liberation Mono" xml:space="preserve">Resolution ..: 15.3 Hz</text><text x="1857" y="1264.1" font-size="14" fill="#f0f0f0" font-family="Liberation Mono" xml:space="preserve">Windowing ...: Hamming</text><text x="1857" y="1286.5" font-size="14" fill="#f0f0f0" font-family="Liberation Mono" xml:space="preserve">Plan ........: CUDA</text></svg>
<div class="a" style="left:420px;top:1325px;width:1652px;height:41px;background:#000"></div>
<div class="a" style="left:818px;top:1325px;width:715px;height:41px;background:linear-gradient(#5a5a5a,#3a3a3a 45%,#2a2a2a)"></div>
<div class="a" style="left:818px;top:1345px;width:715px;height:21px;background:radial-gradient(ellipse 55% 100% at 50% 100%,rgba(160,150,30,0.75),rgba(120,110,20,0.2) 70%,transparent)"></div>
<div class="a" style="left:460px;top:1325px;width:358px;height:20px;background:linear-gradient(#3a3a3a,#111)"></div>
<div class="a" style="left:1533px;top:1325px;width:359px;height:20px;background:linear-gradient(#3a3a3a,#111)"></div>
<svg class="a" style="left:420px;top:1325px" width="1472" height="16" viewBox="420 1325 1472 16"><path d="M460.7 1326V1332" stroke="#bbb" stroke-width="1.2"/><path d="M475.0 1326V1336" stroke="#bbb" stroke-width="1.2"/><path d="M489.3 1326V1332" stroke="#bbb" stroke-width="1.2"/><path d="M503.6 1326V1332" stroke="#bbb" stroke-width="1.2"/><path d="M517.9 1326V1332" stroke="#bbb" stroke-width="1.2"/><path d="M532.2 1326V1332" stroke="#bbb" stroke-width="1.2"/><path d="M546.5 1326V1336" stroke="#bbb" stroke-width="1.2"/><path d="M560.9 1326V1332" stroke="#bbb" stroke-width="1.2"/><path d="M575.2 1326V1332" stroke="#bbb" stroke-width="1.2"/><path d="M589.5 1326V1332" stroke="#bbb" stroke-width="1.2"/><path d="M603.8 1326V1332" stroke="#bbb" stroke-width="1.2"/><path d="M618.1 1326V1336" stroke="#bbb" stroke-width="1.2"/><path d="M632.4 1326V1332" stroke="#bbb" stroke-width="1.2"/><path d="M646.7 1326V1332" stroke="#bbb" stroke-width="1.2"/><path d="M661.0 1326V1332" stroke="#bbb" stroke-width="1.2"/><path d="M675.3 1326V1332" stroke="#bbb" stroke-width="1.2"/><path d="M689.6 1326V1336" stroke="#bbb" stroke-width="1.2"/><path d="M704.0 1326V1332" stroke="#bbb" stroke-width="1.2"/><path d="M718.3 1326V1332" stroke="#bbb" stroke-width="1.2"/><path d="M732.6 1326V1332" stroke="#bbb" stroke-width="1.2"/><path d="M746.9 1326V1332" stroke="#bbb" stroke-width="1.2"/><path d="M761.2 1326V1336" stroke="#bbb" stroke-width="1.2"/><path d="M775.5 1326V1332" stroke="#bbb" stroke-width="1.2"/><path d="M789.8 1326V1332" stroke="#bbb" stroke-width="1.2"/><path d="M804.1 1326V1332" stroke="#bbb" stroke-width="1.2"/><path d="M818.4 1326V1332" stroke="#bbb" stroke-width="1.2"/><path d="M832.8 1326V1336" stroke="#bbb" stroke-width="1.2"/><path d="M847.1 1326V1332" stroke="#bbb" stroke-width="1.2"/><path d="M861.4 1326V1332" stroke="#bbb" stroke-width="1.2"/><path d="M875.7 1326V1332" stroke="#bbb" stroke-width="1.2"/><path d="M890.0 1326V1332" stroke="#bbb" stroke-width="1.2"/><path d="M904.3 1326V1336" stroke="#bbb" stroke-width="1.2"/><path d="M918.6 1326V1332" stroke="#bbb" stroke-width="1.2"/><path d="M932.9 1326V1332" stroke="#bbb" stroke-width="1.2"/><path d="M947.2 1326V1332" stroke="#bbb" stroke-width="1.2"/><path d="M961.5 1326V1332" stroke="#bbb" stroke-width="1.2"/><path d="M975.9 1326V1336" stroke="#bbb" stroke-width="1.2"/><path d="M990.2 1326V1332" stroke="#bbb" stroke-width="1.2"/><path d="M1004.5 1326V1332" stroke="#bbb" stroke-width="1.2"/><path d="M1018.8 1326V1332" stroke="#bbb" stroke-width="1.2"/><path d="M1033.1 1326V1332" stroke="#bbb" stroke-width="1.2"/><path d="M1047.4 1326V1336" stroke="#bbb" stroke-width="1.2"/><path d="M1061.7 1326V1332" stroke="#bbb" stroke-width="1.2"/><path d="M1076.0 1326V1332" stroke="#bbb" stroke-width="1.2"/><path d="M1090.3 1326V1332" stroke="#bbb" stroke-width="1.2"/><path d="M1104.6 1326V1332" stroke="#bbb" stroke-width="1.2"/><path d="M1119.0 1326V1336" stroke="#bbb" stroke-width="1.2"/><path d="M1133.3 1326V1332" stroke="#bbb" stroke-width="1.2"/><path d="M1147.6 1326V1332" stroke="#bbb" stroke-width="1.2"/><path d="M1161.9 1326V1332" stroke="#bbb" stroke-width="1.2"/><path d="M1176.2 1326V1332" stroke="#bbb" stroke-width="1.2"/><path d="M1190.5 1326V1336" stroke="#bbb" stroke-width="1.2"/><path d="M1204.8 1326V1332" stroke="#bbb" stroke-width="1.2"/><path d="M1219.1 1326V1332" stroke="#bbb" stroke-width="1.2"/><path d="M1233.4 1326V1332" stroke="#bbb" stroke-width="1.2"/><path d="M1247.7 1326V1332" stroke="#bbb" stroke-width="1.2"/><path d="M1262.1 1326V1336" stroke="#bbb" stroke-width="1.2"/><path d="M1276.4 1326V1332" stroke="#bbb" stroke-width="1.2"/><path d="M1290.7 1326V1332" stroke="#bbb" stroke-width="1.2"/><path d="M1305.0 1326V1332" stroke="#bbb" stroke-width="1.2"/><path d="M1319.3 1326V1332" stroke="#bbb" stroke-width="1.2"/><path d="M1333.6 1326V1336" stroke="#bbb" stroke-width="1.2"/><path d="M1347.9 1326V1332" stroke="#bbb" stroke-width="1.2"/><path d="M1362.2 1326V1332" stroke="#bbb" stroke-width="1.2"/><path d="M1376.5 1326V1332" stroke="#bbb" stroke-width="1.2"/><path d="M1390.8 1326V1332" stroke="#bbb" stroke-width="1.2"/><path d="M1405.2 1326V1336" stroke="#bbb" stroke-width="1.2"/><path d="M1419.5 1326V1332" stroke="#bbb" stroke-width="1.2"/><path d="M1433.8 1326V1332" stroke="#bbb" stroke-width="1.2"/><path d="M1448.1 1326V1332" stroke="#bbb" stroke-width="1.2"/><path d="M1462.4 1326V1332" stroke="#bbb" stroke-width="1.2"/><path d="M1476.7 1326V1336" stroke="#bbb" stroke-width="1.2"/><path d="M1491.0 1326V1332" stroke="#bbb" stroke-width="1.2"/><path d="M1505.3 1326V1332" stroke="#bbb" stroke-width="1.2"/><path d="M1519.6 1326V1332" stroke="#bbb" stroke-width="1.2"/><path d="M1533.9 1326V1332" stroke="#bbb" stroke-width="1.2"/><path d="M1548.2 1326V1336" stroke="#bbb" stroke-width="1.2"/><path d="M1562.6 1326V1332" stroke="#bbb" stroke-width="1.2"/><path d="M1576.9 1326V1332" stroke="#bbb" stroke-width="1.2"/><path d="M1591.2 1326V1332" stroke="#bbb" stroke-width="1.2"/><path d="M1605.5 1326V1332" stroke="#bbb" stroke-width="1.2"/><path d="M1619.8 1326V1336" stroke="#bbb" stroke-width="1.2"/><path d="M1634.1 1326V1332" stroke="#bbb" stroke-width="1.2"/><path d="M1648.4 1326V1332" stroke="#bbb" stroke-width="1.2"/><path d="M1662.7 1326V1332" stroke="#bbb" stroke-width="1.2"/><path d="M1677.0 1326V1332" stroke="#bbb" stroke-width="1.2"/><path d="M1691.4 1326V1336" stroke="#bbb" stroke-width="1.2"/><path d="M1705.7 1326V1332" stroke="#bbb" stroke-width="1.2"/><path d="M1720.0 1326V1332" stroke="#bbb" stroke-width="1.2"/><path d="M1734.3 1326V1332" stroke="#bbb" stroke-width="1.2"/><path d="M1748.6 1326V1332" stroke="#bbb" stroke-width="1.2"/><path d="M1762.9 1326V1336" stroke="#bbb" stroke-width="1.2"/><path d="M1777.2 1326V1332" stroke="#bbb" stroke-width="1.2"/><path d="M1791.5 1326V1332" stroke="#bbb" stroke-width="1.2"/><path d="M1805.8 1326V1332" stroke="#bbb" stroke-width="1.2"/><path d="M1820.1 1326V1332" stroke="#bbb" stroke-width="1.2"/><path d="M1834.5 1326V1336" stroke="#bbb" stroke-width="1.2"/><path d="M1848.8 1326V1332" stroke="#bbb" stroke-width="1.2"/><path d="M1863.1 1326V1332" stroke="#bbb" stroke-width="1.2"/><path d="M1877.4 1326V1332" stroke="#bbb" stroke-width="1.2"/><path d="M1891.7 1326V1332" stroke="#bbb" stroke-width="1.2"/><path d="M818.5 1325V1366" stroke="#ddd" stroke-width="1.5"/><path d="M1533 1325V1366" stroke="#ccc" stroke-width="1"/></svg>
<div class="a" style="left:1175px;top:1325px;width:3px;height:41px;background:#e8e030"></div>
<div class="t c" style="left:425.0px;width:100px;top:1341px;font-size:19px;color:#bcbcbc">700</div>
<div class="t c" style="left:568.1px;width:100px;top:1341px;font-size:19px;color:#bcbcbc">800</div>
<div class="t c" style="left:711.2px;width:100px;top:1341px;font-size:19px;color:#bcbcbc">900</div>
<div class="t c" style="left:854.3px;width:100px;top:1341px;font-size:19px;color:#d0d0d0">1.000</div>
<div class="t c" style="left:997.4px;width:100px;top:1341px;font-size:19px;color:#d0d0d0">1.100</div>
<div class="t c" style="left:1140.5px;width:100px;top:1341px;font-size:19px;color:#d0d0d0">1.200</div>
<div class="t c" style="left:1283.6px;width:100px;top:1341px;font-size:19px;color:#d0d0d0">1.300</div>
<div class="t c" style="left:1426.7px;width:100px;top:1341px;font-size:19px;color:#d0d0d0">1.400</div>
<div class="t c" style="left:1569.8px;width:100px;top:1341px;font-size:19px;color:#bcbcbc">1.500</div>
<div class="t c" style="left:1712.9px;width:100px;top:1341px;font-size:19px;color:#bcbcbc">1.600</div>
<div class="a" style="left:422px;top:1326px;width:38px;height:39px;background:linear-gradient(#f4f4f4,#e0e0e0);border:1px solid #b8b8b8"></div>
<svg class="a" style="left:428px;top:1333px" width="26" height="26" viewBox="0 0 26 26"><circle cx="13" cy="13" r="10.5" fill="none" stroke="#333" stroke-width="2.2"/><path d="M13 8 L8 13 L13 18Z M18 8 L13 13 L18 18Z" fill="#222"/></svg>
<div class="a" style="left:1893px;top:1327px;width:57px;height:38px;background:linear-gradient(#f6f6f6,#e2e2e2);border:1px solid #bdbdbd"></div>
<div class="a" style="left:1952px;top:1327px;width:78px;height:38px;background:linear-gradient(#f6f6f6,#e2e2e2);border:1px solid #bdbdbd"></div>
<div class="a" style="left:2032px;top:1327px;width:38px;height:38px;background:linear-gradient(#f6f6f6,#e2e2e2);border:1px solid #bdbdbd"></div>
<svg class="a" style="left:1908px;top:1335px" width="26" height="22" viewBox="0 0 26 22"><rect x="2" y="9" width="22" height="11" rx="1.5" fill="none" stroke="#222" stroke-width="1.5"/><path d="M5 12H21M5 14.5H21M8 17H18" stroke="#222" stroke-width="1.5" stroke-dasharray="1.5 1"/><path d="M13 9V6Q13 4 16 3.5Q18 3 18 1" stroke="#222" stroke-width="1.2" fill="none"/></svg>
<div class="t" style="left:1969px;top:1340px;font-size:17px;color:#111">x2</div>
<svg class="a" style="left:2013px;top:1339px" width="8" height="12"><path d="M0 0V12L7 6Z" fill="#111"/></svg>
<svg class="a" style="left:2038px;top:1333px" width="26" height="26" viewBox="0 0 26 26"><circle cx="13" cy="13" r="10.5" fill="none" stroke="#333" stroke-width="2.2"/><path d="M8 8 L13 13 L8 18Z M13 8 L18 13 L13 18Z" fill="#222"/></svg>
<div class="a" style="left:2072px;top:213px;width:2px;height:1153px;background:#9a9a9a"></div>
<div class="a" style="left:2074px;top:215px;width:56px;height:1151px;background:#000"></div>
<div class="a" style="left:2130px;top:213px;width:2px;height:1155px;background:#f0f0f0"></div>
<div class="a" style="left:2074px;top:216px;width:56px;height:21px;background:linear-gradient(#333,#444)"></div>
<div class="a" style="left:2074px;top:258px;width:56px;height:1px;background:#777"></div>
<div class="t c" style="left:2074px;width:56px;top:228px;font-size:17px;color:#ddd">Auto</div>
<div class="t c" style="left:2074px;width:56px;top:321.0px;font-size:12px;color:#aaa">-10</div>
<div class="t c" style="left:2074px;width:56px;top:390.4px;font-size:12px;color:#aaa">-20</div>
<div class="t c" style="left:2074px;width:56px;top:459.8px;font-size:12px;color:#aaa">-30</div>
<div class="a" style="left:2076px;top:534px;width:52px;height:402px;background:linear-gradient(#ffff00 0%,#ffffa0 6%,#ffffff 10%,#ffffff 31%,#c8d4f8 42%,#90a8f0 55%,#6080e0 64%,#3a50b0 74%,#202a70 85%,#0c0e38 100%)"></div>
<div class="a" style="left:2076px;top:935px;width:52px;height:2px;background:#fff"></div>
<div class="a" style="left:2081px;top:534px;width:42px;height:15px;border-radius:0 0 5px 5px;background:rgba(90,90,40,0.55)"></div>
<div class="t c" style="left:2074px;width:56px;top:528px;font-size:12px;color:#d8d8b0">-40</div>
<div class="a" style="left:2081px;top:590.4px;width:42px;height:27px;border-radius:5px;background:rgba(40,40,50,0.55)"></div>
<div class="t c" style="left:2074px;width:56px;top:598.4px;font-size:12px;color:#ddd">-50</div>
<div class="a" style="left:2081px;top:659.8px;width:42px;height:27px;border-radius:5px;background:rgba(40,40,50,0.55)"></div>
<div class="t c" style="left:2074px;width:56px;top:667.8px;font-size:12px;color:#ddd">-60</div>
<div class="a" style="left:2081px;top:729.2px;width:42px;height:27px;border-radius:5px;background:rgba(40,40,50,0.55)"></div>
<div class="t c" style="left:2074px;width:56px;top:737.2px;font-size:12px;color:#ddd">-70</div>
<div class="a" style="left:2081px;top:798.6px;width:42px;height:27px;border-radius:5px;background:rgba(40,40,50,0.55)"></div>
<div class="t c" style="left:2074px;width:56px;top:806.6px;font-size:12px;color:#ddd">-80</div>
<div class="a" style="left:2081px;top:868.0px;width:42px;height:27px;border-radius:5px;background:rgba(40,40,50,0.55)"></div>
<div class="t c" style="left:2074px;width:56px;top:876.0px;font-size:12px;color:#ddd">-90</div>
<div class="t c" style="left:2074px;width:56px;top:944.0px;font-size:12px;color:#aaa">-100</div>
<div class="t c" style="left:2074px;width:56px;top:1013.2px;font-size:12px;color:#aaa">-110</div>
<div class="t c" style="left:2074px;width:56px;top:1082.4px;font-size:12px;color:#aaa">-120</div>
<div class="t c" style="left:2074px;width:56px;top:1151.6px;font-size:12px;color:#aaa">-130</div>
<div class="t c" style="left:2074px;width:56px;top:1220.8px;font-size:12px;color:#aaa">-140</div>
<div class="t c" style="left:2074px;width:56px;top:1290.0px;font-size:12px;color:#aaa">-150</div></body></html>
